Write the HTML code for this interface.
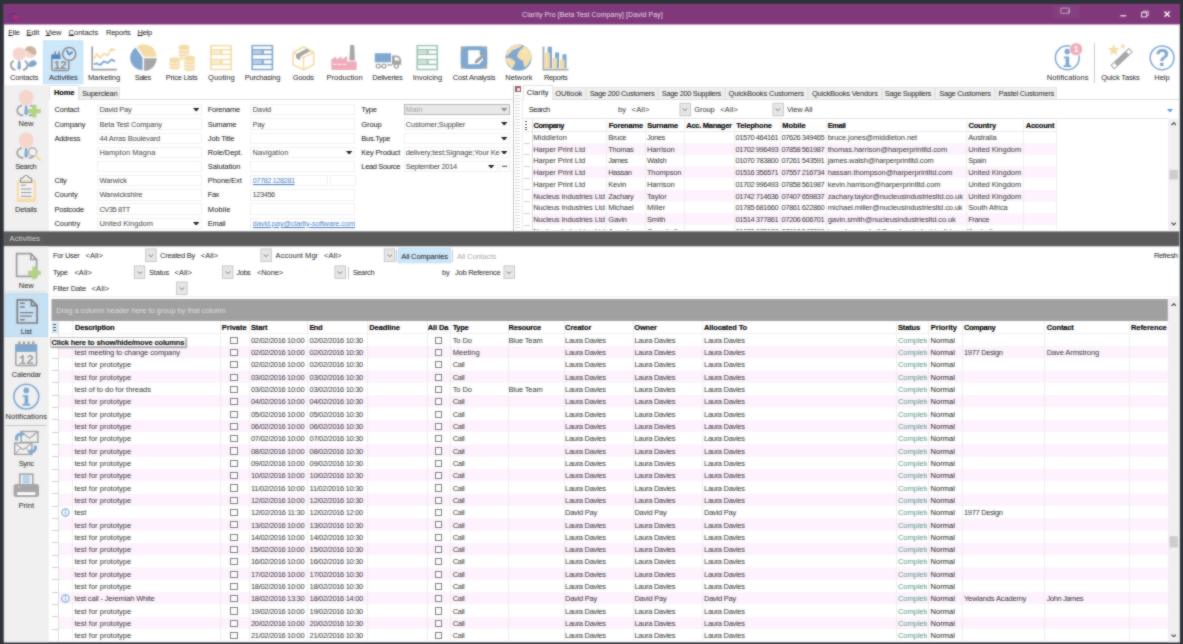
<!DOCTYPE html>
<html lang="en"><head><meta charset="utf-8"><title>Clarity Pro [Beta Test Company] [David Pay]</title>
<style>
html,body{margin:0;padding:0;background:#2f3239;overflow:hidden}
body{width:1183px;height:644px;position:relative;font-family:"Liberation Sans",sans-serif;font-size:7.5px;color:#2a2a2a}
#app{position:absolute;left:0;top:0;width:1183px;height:644px;overflow:hidden}
#app div,#app span.t,#app svg{position:absolute}
.t{white-space:pre;line-height:10px;height:10px;display:block}
u{text-decoration:underline;text-underline-offset:0.4px;text-decoration-thickness:0.7px}
#soft{position:absolute;left:0;top:0;width:1183px;height:644px;-webkit-backdrop-filter:blur(1px);backdrop-filter:blur(1px);opacity:.55;pointer-events:none}
.t[style*=bold]{-webkit-text-stroke:0.15px currentColor}

</style></head>
<body>
<div id="app">
<svg style="left:0;top:0" width="1183" height="644" viewBox="0 0 1183 644"><rect x="3.6" y="4.05" width="1176.5" height="638.55" fill="#fff"/><rect x="3.6" y="4.05" width="1176.5" height="20.4" fill="#80397b"/><rect x="43.3" y="40.8" width="39.6" height="42.9" fill="#cde6fb" stroke="#bcdcf4" stroke-width="0.8"/><rect x="3.6" y="84.9" width="45.1" height="146.6" fill="#f0f0f0"/><rect x="680" y="103.3" width="10.5" height="12.5" fill="#e6e6e6" stroke="#c2c2c2" stroke-width="0.9"/><rect x="772.95" y="103.3" width="10.5" height="12.5" fill="#e6e6e6" stroke="#c2c2c2" stroke-width="0.9"/><rect x="531.6" y="142.91" width="524.4" height="11.71" fill="#fcf2fc"/><rect x="531.6" y="166.32" width="524.4" height="11.71" fill="#fcf2fc"/><rect x="531.6" y="189.73" width="524.4" height="11.71" fill="#fcf2fc"/><rect x="531.6" y="213.15" width="524.4" height="11.71" fill="#fcf2fc"/><rect x="1168" y="118.8" width="10.8" height="111.6" fill="#f0f0f0"/><rect x="1169.4" y="169.9" width="8.5" height="9.6" fill="#cdcdcd"/><rect x="3.6" y="231.4" width="1176.5" height="14.9" fill="#5b5b5b"/><rect x="3.6" y="246.3" width="45.1" height="396.3" fill="#f0f0f0"/><rect x="5.1" y="293.7" width="42.6" height="42.7" fill="#c6dff4" stroke="#b4d4ee" stroke-width="0.8"/><rect x="145.65" y="249" width="10.5" height="12.5" fill="#e6e6e6" stroke="#c2c2c2" stroke-width="0.9"/><rect x="260.85" y="249" width="10.5" height="12.5" fill="#e6e6e6" stroke="#c2c2c2" stroke-width="0.9"/><rect x="384.25" y="249" width="10.5" height="12.5" fill="#e6e6e6" stroke="#c2c2c2" stroke-width="0.9"/><rect x="398.4" y="248.1" width="52.3" height="14.8" fill="#cde6fb" stroke="#bcdcf4" stroke-width="0.8"/><rect x="134.3" y="265.9" width="10.5" height="12.5" fill="#e6e6e6" stroke="#c2c2c2" stroke-width="0.9"/><rect x="222.45" y="265.9" width="10.5" height="12.5" fill="#e6e6e6" stroke="#c2c2c2" stroke-width="0.9"/><rect x="334.95" y="265.9" width="10.5" height="12.5" fill="#e6e6e6" stroke="#c2c2c2" stroke-width="0.9"/><rect x="503.95" y="265.9" width="10.5" height="12.5" fill="#e6e6e6" stroke="#c2c2c2" stroke-width="0.9"/><rect x="176.6" y="281.95" width="10.5" height="12.5" fill="#e6e6e6" stroke="#c2c2c2" stroke-width="0.9"/><rect x="51.5" y="299" width="1116.7" height="22" fill="#a0a0a0"/><rect x="51.6" y="322.2" width="6.3" height="11.9" fill="#d3e8fa"/><rect x="58" y="345.91" width="1109.6" height="12.31" fill="#fcf2fc"/><rect x="58" y="370.53" width="1109.6" height="12.31" fill="#fcf2fc"/><rect x="58" y="395.15" width="1109.6" height="12.31" fill="#fcf2fc"/><rect x="58" y="419.77" width="1109.6" height="12.31" fill="#fcf2fc"/><rect x="58" y="444.39" width="1109.6" height="12.31" fill="#fcf2fc"/><rect x="58" y="469.01" width="1109.6" height="12.31" fill="#fcf2fc"/><rect x="58" y="493.63" width="1109.6" height="12.31" fill="#fcf2fc"/><rect x="58" y="518.25" width="1109.6" height="12.31" fill="#fcf2fc"/><rect x="58" y="542.87" width="1109.6" height="12.31" fill="#fcf2fc"/><rect x="58" y="567.49" width="1109.6" height="12.31" fill="#fcf2fc"/><rect x="58" y="592.11" width="1109.6" height="12.31" fill="#fcf2fc"/><rect x="58" y="616.73" width="1109.6" height="12.31" fill="#fcf2fc"/><rect x="1167.8" y="297.6" width="11" height="345" fill="#f0f0f0"/><rect x="1169.5" y="536.2" width="8.4" height="11.3" fill="#cdcdcd"/><rect x="1179.2" y="24.4" width="1" height="618.2" fill="#d0d0d0"/></svg>
<span class="t" style="left:522.07px;top:10.1px;font-size:6.9px;letter-spacing:0.13px;color:#eadbe9;">Clarity Pro [Beta Test Company] [David Pay]</span>
<span class="t mn" style="left:8.3px;top:28.4px;letter-spacing:-0.12px;color:#1a1a1a;"><u>F</u>ile</span>
<span class="t mn" style="left:26.6px;top:28.4px;letter-spacing:-0.08px;color:#1a1a1a;"><u>E</u>dit</span>
<span class="t mn" style="left:45.6px;top:28.4px;letter-spacing:-0.13px;color:#1a1a1a;"><u>V</u>iew</span>
<span class="t mn" style="left:68.6px;top:28.4px;letter-spacing:-0.01px;color:#1a1a1a;"><u>C</u>ontacts</span>
<span class="t mn" style="left:106px;top:28.4px;letter-spacing:-0.25px;color:#1a1a1a;">Reports</span>
<span class="t mn" style="left:137.5px;top:28.4px;letter-spacing:-0.26px;color:#1a1a1a;"><u>H</u>elp</span>
<span class="t" style="left:9.88px;top:73px;letter-spacing:-0.14px;color:#1f1f1f;">Contacts</span>
<span class="t" style="left:49.01px;top:73px;letter-spacing:-0.09px;color:#1f1f1f;">Activities</span>
<span class="t" style="left:87.95px;top:73px;letter-spacing:-0.1px;color:#1f1f1f;">Marketing</span>
<span class="t" style="left:134.8px;top:73px;letter-spacing:-0.59px;color:#1f1f1f;">Sales</span>
<span class="t" style="left:165.86px;top:73px;letter-spacing:-0.27px;color:#1f1f1f;">Price Lists</span>
<span class="t" style="left:208.08px;top:73px;letter-spacing:0.06px;color:#1f1f1f;">Quoting</span>
<span class="t" style="left:244.7px;top:73px;letter-spacing:-0.19px;color:#1f1f1f;">Purchasing</span>
<span class="t" style="left:292.87px;top:73px;letter-spacing:-0.26px;color:#1f1f1f;">Goods</span>
<span class="t" style="left:326.52px;top:73px;letter-spacing:0.03px;color:#1f1f1f;">Production</span>
<span class="t" style="left:372.26px;top:73px;letter-spacing:-0.27px;color:#1f1f1f;">Deliveries</span>
<span class="t" style="left:412.73px;top:73px;letter-spacing:-0.03px;color:#1f1f1f;">Invoicing</span>
<span class="t" style="left:452.8px;top:73px;letter-spacing:-0.2px;color:#1f1f1f;">Cost Analysis</span>
<span class="t" style="left:505.36px;top:73px;letter-spacing:-0.07px;color:#1f1f1f;">Network</span>
<span class="t" style="left:543.94px;top:73px;letter-spacing:-0.42px;color:#1f1f1f;">Reports</span>
<span class="t" style="left:1046.79px;top:73px;letter-spacing:0.08px;color:#1f1f1f;">Notifications</span>
<span class="t" style="left:1101.21px;top:73px;letter-spacing:-0.17px;color:#1f1f1f;">Quick Tasks</span>
<span class="t" style="left:1154.33px;top:73px;letter-spacing:-0.03px;color:#1f1f1f;">Help</span>
<div style="left:1094.3px;top:42.6px;width:1px;height:40px;background:#c9c9c9;"></div>
<span class="t" style="left:18.57px;top:119px;letter-spacing:-0.07px;color:#1f1f1f;">New</span>
<span class="t" style="left:15.29px;top:161.8px;letter-spacing:-0.47px;color:#1f1f1f;">Search</span>
<span class="t" style="left:15.12px;top:205px;letter-spacing:-0.19px;color:#1f1f1f;">Details</span>
<div style="left:49px;top:99px;width:464px;height:1px;background:#dcdcdc;"></div>
<div style="left:49.4px;top:85px;width:29.6px;height:14.6px;background:#fff;border:1px solid #e3e3e3;border-bottom:none;box-sizing:border-box;"></div>
<div style="left:79.3px;top:87.2px;width:40.4px;height:12px;background:#f0f0f0;border:1px solid #e3e3e3;border-bottom:none;box-sizing:border-box;"></div>
<span class="t" style="left:53.9px;top:87.5px;letter-spacing:-0.13px;color:#000;font-weight:bold;">Home</span>
<span class="t" style="left:82px;top:88.5px;letter-spacing:-0.26px;color:#222;">Superclean</span>
<span class="t" style="left:54.4px;top:105.4px;letter-spacing:-0.17px;color:#151515;">Contact</span>
<div style="left:97.1px;top:104.3px;width:105px;height:11.2px;background:#fff;border:1px solid #efefef;box-sizing:border-box;"></div>
<span class="t" style="left:99.4px;top:105.4px;letter-spacing:-0.24px;color:#444;width:93px;overflow:hidden;">David Pay</span>
<svg style="left:193px;top:108.2px" width="6.4" height="3.6" viewBox="0 0 64 36"><path d="M0 0H64L32 36z" fill="#1a1a1a"/></svg>
<span class="t" style="left:54.4px;top:119.57px;letter-spacing:-0.18px;color:#151515;">Company</span>
<div style="left:97.1px;top:118.47px;width:105px;height:11.2px;background:#fff;border:1px solid #efefef;box-sizing:border-box;"></div>
<span class="t" style="left:99.4px;top:119.57px;letter-spacing:-0.17px;color:#444;width:102px;overflow:hidden;">Beta Test Company</span>
<span class="t" style="left:54.4px;top:133.74px;letter-spacing:-0.23px;color:#151515;">Address</span>
<div style="left:97.1px;top:132.64px;width:105px;height:11.2px;background:#fff;border:1px solid #efefef;box-sizing:border-box;"></div>
<span class="t" style="left:99.4px;top:133.74px;letter-spacing:-0.18px;color:#444;width:102px;overflow:hidden;">44 Arras Boulevard</span>
<div style="left:97.1px;top:146.81px;width:105px;height:11.2px;background:#fff;border:1px solid #efefef;box-sizing:border-box;"></div>
<span class="t" style="left:99.4px;top:147.91px;letter-spacing:0.04px;color:#444;width:102px;overflow:hidden;">Hampton Magna</span>
<div style="left:97.1px;top:160.98px;width:105px;height:11.2px;background:#fff;border:1px solid #efefef;box-sizing:border-box;"></div>
<span class="t" style="left:54.4px;top:176.25px;letter-spacing:-0.15px;color:#151515;">City</span>
<div style="left:97.1px;top:175.15px;width:105px;height:11.2px;background:#fff;border:1px solid #efefef;box-sizing:border-box;"></div>
<span class="t" style="left:99.4px;top:176.25px;letter-spacing:-0.06px;color:#444;width:102px;overflow:hidden;">Warwick</span>
<span class="t" style="left:54.4px;top:190.42px;letter-spacing:-0.06px;color:#151515;">County</span>
<div style="left:97.1px;top:189.32px;width:105px;height:11.2px;background:#fff;border:1px solid #efefef;box-sizing:border-box;"></div>
<span class="t" style="left:99.4px;top:190.42px;letter-spacing:-0.11px;color:#444;width:102px;overflow:hidden;">Warwickshire</span>
<span class="t" style="left:54.4px;top:204.59px;letter-spacing:-0.21px;color:#151515;">Postcode</span>
<div style="left:97.1px;top:203.49px;width:105px;height:11.2px;background:#fff;border:1px solid #efefef;box-sizing:border-box;"></div>
<span class="t" style="left:99.4px;top:204.59px;letter-spacing:-0.46px;color:#444;width:102px;overflow:hidden;">CV35 8TT</span>
<span class="t" style="left:54.4px;top:218.76px;letter-spacing:-0.05px;color:#151515;">Country</span>
<div style="left:97.1px;top:217.66px;width:105px;height:11.2px;background:#fff;border:1px solid #efefef;box-sizing:border-box;"></div>
<span class="t" style="left:99.4px;top:218.76px;letter-spacing:0.02px;color:#444;width:93px;overflow:hidden;">United Kingdom</span>
<svg style="left:193px;top:221.56px" width="6.4" height="3.6" viewBox="0 0 64 36"><path d="M0 0H64L32 36z" fill="#1a1a1a"/></svg>
<span class="t" style="left:207.8px;top:105.4px;letter-spacing:-0.27px;color:#151515;">Forename</span>
<div style="left:250.3px;top:104.3px;width:105.2px;height:11.2px;background:#fff;border:1px solid #efefef;box-sizing:border-box;"></div>
<span class="t" style="left:252.6px;top:105.4px;letter-spacing:-0.14px;color:#444;width:102.2px;overflow:hidden;">David</span>
<span class="t" style="left:207.8px;top:119.57px;letter-spacing:-0.3px;color:#151515;">Surname</span>
<div style="left:250.3px;top:118.47px;width:105.2px;height:11.2px;background:#fff;border:1px solid #efefef;box-sizing:border-box;"></div>
<span class="t" style="left:252.6px;top:119.57px;letter-spacing:-0.41px;color:#444;width:102.2px;overflow:hidden;">Pay</span>
<span class="t" style="left:207.8px;top:133.74px;letter-spacing:-0.16px;color:#151515;">Job Title</span>
<div style="left:250.3px;top:132.64px;width:105.2px;height:11.2px;background:#fff;border:1px solid #efefef;box-sizing:border-box;"></div>
<span class="t" style="left:207.8px;top:147.91px;letter-spacing:-0.09px;color:#151515;">Role/Dept.</span>
<div style="left:250.3px;top:146.81px;width:105.2px;height:11.2px;background:#fff;border:1px solid #efefef;box-sizing:border-box;"></div>
<span class="t" style="left:252.6px;top:147.91px;letter-spacing:0.03px;color:#444;width:93.2px;overflow:hidden;">Navigation</span>
<svg style="left:346.4px;top:150.71px" width="6.4" height="3.6" viewBox="0 0 64 36"><path d="M0 0H64L32 36z" fill="#1a1a1a"/></svg>
<span class="t" style="left:207.8px;top:162.08px;letter-spacing:-0.07px;color:#151515;">Salutation</span>
<div style="left:250.3px;top:160.98px;width:105.2px;height:11.2px;background:#fff;border:1px solid #efefef;box-sizing:border-box;"></div>
<span class="t" style="left:207.8px;top:176.25px;letter-spacing:-0.08px;color:#151515;">Phone/Ext</span>
<div style="left:250.3px;top:175.15px;width:77.9px;height:11.2px;background:#fff;border:1px solid #efefef;box-sizing:border-box;"></div>
<span class="t" style="left:252.6px;top:176.25px;letter-spacing:-0.5px;color:#4f86c6;width:74.9px;overflow:hidden;text-decoration:underline;">07782 128281</span>
<div style="left:330px;top:175.15px;width:25.5px;height:11.2px;background:#fff;border:1px solid #efefef;box-sizing:border-box;"></div>
<span class="t" style="left:207.8px;top:190.42px;letter-spacing:-0.47px;color:#151515;">Fax</span>
<div style="left:250.3px;top:189.32px;width:105.2px;height:11.2px;background:#fff;border:1px solid #efefef;box-sizing:border-box;"></div>
<span class="t" style="left:252.6px;top:190.42px;letter-spacing:-0.47px;color:#444;width:102.2px;overflow:hidden;">123456</span>
<span class="t" style="left:207.8px;top:204.59px;letter-spacing:0.12px;color:#151515;">Mobile</span>
<div style="left:250.3px;top:203.49px;width:105.2px;height:11.2px;background:#fff;border:1px solid #efefef;box-sizing:border-box;"></div>
<span class="t" style="left:207.8px;top:218.76px;letter-spacing:-0.3px;color:#151515;">Email</span>
<div style="left:250.3px;top:217.66px;width:105.2px;height:11.2px;background:#fff;border:1px solid #efefef;box-sizing:border-box;"></div>
<span class="t" style="left:252.6px;top:218.76px;letter-spacing:-0.13px;color:#4f86c6;width:102.2px;overflow:hidden;text-decoration:underline;">david.pay@clarity-software.com</span>
<span class="t" style="left:361.3px;top:105.4px;letter-spacing:-0.21px;color:#151515;">Type</span>
<div style="left:403.5px;top:104.3px;width:106.1px;height:11.2px;background:#e9e9e9;border:1px solid #b4b4b4;box-sizing:border-box;"></div>
<span class="t" style="left:405.8px;top:105.4px;letter-spacing:0.09px;color:#a0a0a0;width:94.1px;overflow:hidden;">Main</span>
<svg style="left:500.5px;top:108.2px" width="6.4" height="3.6" viewBox="0 0 64 36"><path d="M0 0H64L32 36z" fill="#8c8c8c"/></svg>
<span class="t" style="left:361.3px;top:119.57px;letter-spacing:-0.1px;color:#151515;">Group</span>
<div style="left:403.5px;top:118.47px;width:106.1px;height:11.2px;background:#fff;border:1px solid #efefef;box-sizing:border-box;"></div>
<span class="t" style="left:405.8px;top:119.57px;letter-spacing:-0.17px;color:#444;width:94.1px;overflow:hidden;">Customer;Supplier</span>
<svg style="left:500.5px;top:122.37px" width="6.4" height="3.6" viewBox="0 0 64 36"><path d="M0 0H64L32 36z" fill="#1a1a1a"/></svg>
<span class="t" style="left:361.3px;top:133.74px;letter-spacing:-0.29px;color:#151515;">Bus.Type</span>
<div style="left:403.5px;top:132.64px;width:106.1px;height:11.2px;background:#fff;border:1px solid #efefef;box-sizing:border-box;"></div>
<svg style="left:500.5px;top:136.54px" width="6.4" height="3.6" viewBox="0 0 64 36"><path d="M0 0H64L32 36z" fill="#1a1a1a"/></svg>
<span class="t" style="left:361.3px;top:147.91px;letter-spacing:-0.19px;color:#151515;">Key Product</span>
<div style="left:403.5px;top:146.81px;width:106.1px;height:11.2px;background:#fff;border:1px solid #efefef;box-sizing:border-box;"></div>
<span class="t" style="left:405.8px;top:147.91px;letter-spacing:-0.15px;color:#444;width:94.1px;overflow:hidden;">delivery;test;Signage;Your Ke</span>
<svg style="left:500.5px;top:150.71px" width="6.4" height="3.6" viewBox="0 0 64 36"><path d="M0 0H64L32 36z" fill="#1a1a1a"/></svg>
<span class="t" style="left:361.3px;top:162.08px;letter-spacing:-0.34px;color:#151515;">Lead Source</span>
<div style="left:403.5px;top:160.98px;width:94px;height:11.2px;background:#fff;border:1px solid #efefef;box-sizing:border-box;"></div>
<span class="t" style="left:405.8px;top:162.08px;letter-spacing:-0.31px;color:#444;width:82px;overflow:hidden;">September 2014</span>
<svg style="left:488.4px;top:164.88px" width="6.4" height="3.6" viewBox="0 0 64 36"><path d="M0 0H64L32 36z" fill="#1a1a1a"/></svg>
<div style="left:499px;top:160.98px;width:10.6px;height:11.2px;background:#fff;border:1px solid #efefef;box-sizing:border-box;"></div>
<span class="t" style="left:501.72px;top:159.88px;letter-spacing:-0.35px;color:#111;font-weight:bold;">...</span>
<div style="left:513.2px;top:85px;width:1px;height:146px;background:#c4c4c4;"></div>
<div style="left:515px;top:86.2px;width:6px;height:5.8px;background:#9a5a62;"></div>
<div style="left:516.6px;top:88px;width:3.2px;height:2.8px;background:#f1e9ea;"></div>
<div style="left:515.4px;top:95px;width:4.6px;height:135px;background-image:repeating-linear-gradient(to bottom,#dcdcdc 0,#dcdcdc 1px,transparent 1px,transparent 3px);"></div>
<div style="left:522.2px;top:99px;width:1px;height:131px;background:#ececec;"></div>
<div style="left:520.5px;top:99.2px;width:660px;height:1px;background:#dcdcdc;"></div>
<div style="left:522.8px;top:85px;width:29.8px;height:14.6px;background:#fff;border:1px solid #e3e3e3;border-bottom:none;box-sizing:border-box;"></div>
<span class="t" style="left:526.7px;top:88.1px;letter-spacing:0.11px;color:#111;">Clarity</span>
<div style="left:552.4px;top:87.2px;width:33.4px;height:12px;background:#f0f0f0;border:1px solid #e3e3e3;border-bottom:none;box-sizing:border-box;"></div>
<span class="t" style="left:555.3px;top:88.7px;letter-spacing:-0.01px;color:#222;">OUtlook</span>
<div style="left:585.8px;top:87.2px;width:72.6px;height:12px;background:#f0f0f0;border:1px solid #e3e3e3;border-bottom:none;box-sizing:border-box;"></div>
<span class="t" style="left:589.7px;top:88.7px;letter-spacing:-0.32px;color:#222;">Sage 200 Customers</span>
<div style="left:658.4px;top:87.2px;width:66.7px;height:12px;background:#f0f0f0;border:1px solid #e3e3e3;border-bottom:none;box-sizing:border-box;"></div>
<span class="t" style="left:661.8px;top:88.7px;letter-spacing:-0.35px;color:#222;">Sage 200 Suppliers</span>
<div style="left:725.1px;top:87.2px;width:83px;height:12px;background:#f0f0f0;border:1px solid #e3e3e3;border-bottom:none;box-sizing:border-box;"></div>
<span class="t" style="left:728.5px;top:88.7px;letter-spacing:-0.15px;color:#222;">QuickBooks Customers</span>
<div style="left:808.1px;top:87.2px;width:73.9px;height:12px;background:#f0f0f0;border:1px solid #e3e3e3;border-bottom:none;box-sizing:border-box;"></div>
<span class="t" style="left:812px;top:88.7px;letter-spacing:-0.22px;color:#222;">QuickBooks Vendors</span>
<div style="left:882px;top:87.2px;width:53.4px;height:12px;background:#f0f0f0;border:1px solid #e3e3e3;border-bottom:none;box-sizing:border-box;"></div>
<span class="t" style="left:884.8px;top:88.7px;letter-spacing:-0.33px;color:#222;">Sage Suppliers</span>
<div style="left:935.4px;top:87.2px;width:59.2px;height:12px;background:#f0f0f0;border:1px solid #e3e3e3;border-bottom:none;box-sizing:border-box;"></div>
<span class="t" style="left:939.2px;top:88.7px;letter-spacing:-0.31px;color:#222;">Sage Customers</span>
<div style="left:994.6px;top:87.2px;width:62.8px;height:12px;background:#f0f0f0;border:1px solid #e3e3e3;border-bottom:none;box-sizing:border-box;"></div>
<span class="t" style="left:998.5px;top:88.7px;letter-spacing:-0.23px;color:#222;">Pastel Customers</span>
<span class="t" style="left:528.7px;top:104.9px;letter-spacing:-0.47px;color:#151515;">Search</span>
<span class="t" style="left:618.1px;top:104.9px;letter-spacing:0.04px;color:#333;">by</span>
<span class="t" style="left:631.6px;top:104.9px;letter-spacing:0.18px;color:#333;">&lt;All&gt;</span>
<svg style="left:682.35px;top:108.05px" width="5.8" height="3.4" viewBox="0 0 58 34"><path d="M5 5L29 27L53 5" fill="none" stroke="#6a6a6a" stroke-width="9"/></svg>
<span class="t" style="left:694.3px;top:104.9px;letter-spacing:-0.1px;color:#333;">Group</span>
<span class="t" style="left:720.2px;top:104.9px;letter-spacing:0.18px;color:#333;">&lt;All&gt;</span>
<svg style="left:775.3px;top:108.05px" width="5.8" height="3.4" viewBox="0 0 58 34"><path d="M5 5L29 27L53 5" fill="none" stroke="#6a6a6a" stroke-width="9"/></svg>
<span class="t" style="left:786.9px;top:104.9px;letter-spacing:-0.08px;color:#333;">View All</span>
<svg style="left:1167.3px;top:108.6px" width="6" height="3.6" viewBox="0 0 60 36"><path d="M0 0H60L30 36z" fill="#5b9bd5"/></svg>
<div style="left:523.5px;top:118.4px;width:644px;height:1px;background:#e4e4e4;"></div>
<div style="left:523.5px;top:131.2px;width:532.5px;height:1px;background:#e8e8e8;"></div>
<span class="t" style="left:533.6px;top:120.8px;letter-spacing:-0.54px;color:#000;font-weight:bold;">Company</span>
<span class="t" style="left:608.7px;top:120.8px;letter-spacing:-0.21px;color:#000;font-weight:bold;">Forename</span>
<span class="t" style="left:647.2px;top:120.8px;letter-spacing:-0.2px;color:#000;font-weight:bold;">Surname</span>
<span class="t" style="left:686.3px;top:120.8px;letter-spacing:-0.28px;color:#000;font-weight:bold;">Acc. Manager</span>
<span class="t" style="left:736.3px;top:120.8px;letter-spacing:-0.15px;color:#000;font-weight:bold;">Telephone</span>
<span class="t" style="left:782.3px;top:120.8px;letter-spacing:-0.07px;color:#000;font-weight:bold;">Mobile</span>
<span class="t" style="left:827.7px;top:120.8px;letter-spacing:-0.44px;color:#000;font-weight:bold;">Email</span>
<span class="t" style="left:968.4px;top:120.8px;letter-spacing:-0.18px;color:#000;font-weight:bold;">Country</span>
<span class="t" style="left:1025.7px;top:120.8px;letter-spacing:-0.21px;color:#000;font-weight:bold;">Account</span>
<div style="left:524.6px;top:121.2px;width:2.6px;height:8.4px;background-image:repeating-linear-gradient(to bottom,#555 0,#555 1.1px,transparent 1.1px,transparent 2.8px);"></div>
<div style="left:524.2px;top:142.61px;width:6.2px;height:0.8px;background:#cfcfcf;"></div>
<span class="t" style="left:533.2px;top:133px;letter-spacing:0.15px;color:#343434;">Middleton</span>
<span class="t" style="left:608.3px;top:133px;letter-spacing:-0.34px;color:#343434;">Bruce</span>
<span class="t" style="left:646.9px;top:133px;letter-spacing:-0.43px;color:#343434;">Jones</span>
<span class="t" style="left:735.6px;top:133px;letter-spacing:-0.45px;color:#343434;">01570 464161</span>
<span class="t" style="left:781.6px;top:133px;letter-spacing:-0.45px;color:#343434;">07626 349465</span>
<span class="t" style="left:827.7px;top:133px;letter-spacing:-0.08px;color:#343434;">bruce.jones@middleton.net</span>
<span class="t" style="left:968.2px;top:133px;letter-spacing:-0.09px;color:#343434;">Australia</span>
<div style="left:524.2px;top:154.31px;width:6.2px;height:0.8px;background:#cfcfcf;"></div>
<span class="t" style="left:533.2px;top:144.71px;letter-spacing:-0.07px;color:#343434;">Harper Print Ltd</span>
<span class="t" style="left:608.3px;top:144.71px;letter-spacing:-0.31px;color:#343434;">Thomas</span>
<span class="t" style="left:646.9px;top:144.71px;letter-spacing:-0.08px;color:#343434;">Harrison</span>
<span class="t" style="left:735.6px;top:144.71px;letter-spacing:-0.45px;color:#343434;">01702 996493</span>
<span class="t" style="left:781.6px;top:144.71px;letter-spacing:-0.45px;color:#343434;">07858 561987</span>
<span class="t" style="left:827.7px;top:144.71px;letter-spacing:-0.07px;color:#343434;">thomas.harrison@harperprintltd.com</span>
<span class="t" style="left:968.2px;top:144.71px;letter-spacing:-0.03px;color:#343434;">United Kingdom</span>
<div style="left:524.2px;top:166.02px;width:6.2px;height:0.8px;background:#cfcfcf;"></div>
<span class="t" style="left:533.2px;top:156.42px;letter-spacing:-0.07px;color:#343434;">Harper Print Ltd</span>
<span class="t" style="left:608.3px;top:156.42px;letter-spacing:-0.6px;color:#343434;">James</span>
<span class="t" style="left:646.9px;top:156.42px;letter-spacing:-0.17px;color:#343434;">Walsh</span>
<span class="t" style="left:735.6px;top:156.42px;letter-spacing:-0.45px;color:#343434;">01070 783800</span>
<span class="t" style="left:781.6px;top:156.42px;letter-spacing:-0.45px;color:#343434;">07261 543591</span>
<span class="t" style="left:827.7px;top:156.42px;letter-spacing:-0.11px;color:#343434;">james.walsh@harperprintltd.com</span>
<span class="t" style="left:968.2px;top:156.42px;letter-spacing:-0.26px;color:#343434;">Spain</span>
<div style="left:524.2px;top:177.73px;width:6.2px;height:0.8px;background:#cfcfcf;"></div>
<span class="t" style="left:533.2px;top:168.12px;letter-spacing:-0.07px;color:#343434;">Harper Print Ltd</span>
<span class="t" style="left:608.3px;top:168.12px;letter-spacing:-0.34px;color:#343434;">Hassan</span>
<span class="t" style="left:646.9px;top:168.12px;letter-spacing:-0.12px;color:#343434;">Thompson</span>
<span class="t" style="left:735.6px;top:168.12px;letter-spacing:-0.45px;color:#343434;">01516 356571</span>
<span class="t" style="left:781.6px;top:168.12px;letter-spacing:-0.45px;color:#343434;">07557 216734</span>
<span class="t" style="left:827.7px;top:168.12px;letter-spacing:-0.08px;color:#343434;">hassan.thompson@harperprintltd.com</span>
<span class="t" style="left:968.2px;top:168.12px;letter-spacing:-0.03px;color:#343434;">United Kingdom</span>
<div style="left:524.2px;top:189.43px;width:6.2px;height:0.8px;background:#cfcfcf;"></div>
<span class="t" style="left:533.2px;top:179.83px;letter-spacing:-0.07px;color:#343434;">Harper Print Ltd</span>
<span class="t" style="left:608.3px;top:179.83px;letter-spacing:-0.18px;color:#343434;">Kevin</span>
<span class="t" style="left:646.9px;top:179.83px;letter-spacing:-0.08px;color:#343434;">Harrison</span>
<span class="t" style="left:735.6px;top:179.83px;letter-spacing:-0.45px;color:#343434;">01702 996493</span>
<span class="t" style="left:781.6px;top:179.83px;letter-spacing:-0.45px;color:#343434;">07858 561987</span>
<span class="t" style="left:827.7px;top:179.83px;letter-spacing:-0.06px;color:#343434;">kevin.harrison@harperprintltd.com</span>
<span class="t" style="left:968.2px;top:179.83px;letter-spacing:-0.03px;color:#343434;">United Kingdom</span>
<div style="left:524.2px;top:201.14px;width:6.2px;height:0.8px;background:#cfcfcf;"></div>
<span class="t" style="left:533.2px;top:191.54px;letter-spacing:-0.12px;color:#343434;">Nucleus Industries Ltd</span>
<span class="t" style="left:608.3px;top:191.54px;letter-spacing:-0.26px;color:#343434;">Zachary</span>
<span class="t" style="left:646.9px;top:191.54px;letter-spacing:-0.05px;color:#343434;">Taylor</span>
<span class="t" style="left:735.6px;top:191.54px;letter-spacing:-0.45px;color:#343434;">01742 714636</span>
<span class="t" style="left:781.6px;top:191.54px;letter-spacing:-0.45px;color:#343434;">07407 659837</span>
<span class="t" style="left:827.7px;top:191.54px;letter-spacing:-0.11px;color:#343434;">zachary.taylor@nucleusindustriesltd.co.uk</span>
<span class="t" style="left:968.2px;top:191.54px;letter-spacing:-0.03px;color:#343434;">United Kingdom</span>
<div style="left:524.2px;top:212.85px;width:6.2px;height:0.8px;background:#cfcfcf;"></div>
<span class="t" style="left:533.2px;top:203.25px;letter-spacing:-0.12px;color:#343434;">Nucleus Industries Ltd</span>
<span class="t" style="left:608.3px;top:203.25px;letter-spacing:-0.08px;color:#343434;">Michael</span>
<span class="t" style="left:646.9px;top:203.25px;letter-spacing:0.09px;color:#343434;">Miller</span>
<span class="t" style="left:735.6px;top:203.25px;letter-spacing:-0.45px;color:#343434;">01785 681660</span>
<span class="t" style="left:781.6px;top:203.25px;letter-spacing:-0.45px;color:#343434;">07861 622860</span>
<span class="t" style="left:827.7px;top:203.25px;letter-spacing:-0.11px;color:#343434;">michael.miller@nucleusindustriesltd.co.uk</span>
<span class="t" style="left:968.2px;top:203.25px;letter-spacing:-0.08px;color:#343434;">South Africa</span>
<div style="left:524.2px;top:224.56px;width:6.2px;height:0.8px;background:#cfcfcf;"></div>
<span class="t" style="left:533.2px;top:214.95px;letter-spacing:-0.12px;color:#343434;">Nucleus Industries Ltd</span>
<span class="t" style="left:608.3px;top:214.95px;letter-spacing:-0.22px;color:#343434;">Gavin</span>
<span class="t" style="left:646.9px;top:214.95px;letter-spacing:-0.14px;color:#343434;">Smith</span>
<span class="t" style="left:735.6px;top:214.95px;letter-spacing:-0.45px;color:#343434;">01514 377861</span>
<span class="t" style="left:781.6px;top:214.95px;letter-spacing:-0.45px;color:#343434;">07206 606701</span>
<span class="t" style="left:827.7px;top:214.95px;letter-spacing:-0.09px;color:#343434;">gavin.smith@nucleusindustriesltd.co.uk</span>
<span class="t" style="left:968.2px;top:214.95px;letter-spacing:-0.4px;color:#343434;">France</span>
<div style="left:531px;top:225.31px;width:530px;height:4.89px;overflow:hidden">
<span class="t" style="left:2.2px;top:1.35px;letter-spacing:-0.12px;color:#343434;">Nucleus Industries Ltd</span>
<span class="t" style="left:77.3px;top:1.35px;letter-spacing:-0.33px;color:#343434;">Joseph</span>
<span class="t" style="left:115.9px;top:1.35px;letter-spacing:-0.19px;color:#343434;">Campbell</span>
<span class="t" style="left:204.6px;top:1.35px;letter-spacing:-0.45px;color:#343434;">01670 985138</span>
<span class="t" style="left:250.6px;top:1.35px;letter-spacing:-0.45px;color:#343434;">07618 543299</span>
<span class="t" style="left:296.7px;top:1.35px;letter-spacing:-0.11px;color:#343434;">joseph.campbell@nucleusindustriesltd.co.uk</span>
<span class="t" style="left:437.2px;top:1.35px;letter-spacing:-0.09px;color:#343434;">Australia</span>
</div>
<div style="left:531.6px;top:119px;width:1px;height:111.2px;background:#dedede;"></div>
<div style="left:606.4px;top:119px;width:1px;height:111.2px;background:#eeeeee;"></div>
<div style="left:645.2px;top:119px;width:1px;height:111.2px;background:#eeeeee;"></div>
<div style="left:684px;top:119px;width:1px;height:111.2px;background:#eeeeee;"></div>
<div style="left:734.3px;top:119px;width:1px;height:111.2px;background:#eeeeee;"></div>
<div style="left:780.3px;top:119px;width:1px;height:111.2px;background:#eeeeee;"></div>
<div style="left:825.7px;top:119px;width:1px;height:111.2px;background:#eeeeee;"></div>
<div style="left:966px;top:119px;width:1px;height:111.2px;background:#eeeeee;"></div>
<div style="left:1023.4px;top:119px;width:1px;height:111.2px;background:#eeeeee;"></div>
<div style="left:1055.8px;top:119px;width:1px;height:111.2px;background:#eeeeee;"></div>
<svg style="left:1170.5px;top:122.4px" width="5.6" height="3.6" viewBox="0 0 56 36"><path d="M5 30L28 8L51 30" fill="none" stroke="#4a4a4a" stroke-width="13"/></svg>
<svg style="left:1170.5px;top:222px" width="5.6" height="3.6" viewBox="0 0 56 36"><path d="M5 6L28 28L51 6" fill="none" stroke="#4a4a4a" stroke-width="13"/></svg>
<span class="t" style="left:9.6px;top:234.1px;font-size:7.6px;letter-spacing:0.05px;color:#d6d6d6;">Activities</span>
<span class="t" style="left:18.87px;top:280.9px;letter-spacing:-0.07px;color:#1f1f1f;">New</span>
<span class="t" style="left:20.68px;top:327.3px;letter-spacing:-0.15px;color:#1f1f1f;">List</span>
<span class="t" style="left:11.71px;top:369.8px;letter-spacing:-0.18px;color:#1f1f1f;">Calendar</span>
<span class="t" style="left:5.62px;top:412.3px;letter-spacing:0.04px;color:#1f1f1f;">Notifications</span>
<span class="t" style="left:18.67px;top:459px;letter-spacing:-0.47px;color:#1f1f1f;">Sync</span>
<span class="t" style="left:18.6px;top:501.3px;color:#1f1f1f;">Print</span>
<div style="left:6.4px;top:424.6px;width:39.6px;height:1px;background:#c4c4c4;"></div>
<div style="left:6.4px;top:291.2px;width:39.6px;height:1px;background:#dedede;"></div>
<span class="t" style="left:53px;top:250.9px;letter-spacing:-0.33px;color:#1f1f1f;">For User</span>
<span class="t" style="left:85.5px;top:250.9px;letter-spacing:0.08px;color:#1f1f1f;">&lt;All&gt;</span>
<svg style="left:148px;top:253.75px" width="5.8" height="3.4" viewBox="0 0 58 34"><path d="M5 5L29 27L53 5" fill="none" stroke="#6a6a6a" stroke-width="9"/></svg>
<span class="t" style="left:160px;top:250.9px;letter-spacing:-0.25px;color:#1f1f1f;">Created By</span>
<span class="t" style="left:200.8px;top:250.9px;letter-spacing:0.08px;color:#1f1f1f;">&lt;All&gt;</span>
<svg style="left:263.2px;top:253.75px" width="5.8" height="3.4" viewBox="0 0 58 34"><path d="M5 5L29 27L53 5" fill="none" stroke="#6a6a6a" stroke-width="9"/></svg>
<span class="t" style="left:275.6px;top:250.9px;letter-spacing:0.04px;color:#1f1f1f;">Account Mgr</span>
<span class="t" style="left:324px;top:250.9px;letter-spacing:0.08px;color:#1f1f1f;">&lt;All&gt;</span>
<svg style="left:386.6px;top:253.75px" width="5.8" height="3.4" viewBox="0 0 58 34"><path d="M5 5L29 27L53 5" fill="none" stroke="#6a6a6a" stroke-width="9"/></svg>
<div style="left:396.2px;top:249.5px;width:1px;height:12px;background:#c4c4c4;"></div>
<span class="t" style="left:401.28px;top:251.6px;letter-spacing:-0.14px;color:#111;">All Companies</span>
<div style="left:452.3px;top:249.5px;width:1px;height:12px;background:#c4c4c4;"></div>
<span class="t" style="left:457px;top:251.6px;letter-spacing:-0.08px;color:#a8a8a8;">All Contacts</span>
<span class="t" style="left:1154px;top:250.9px;letter-spacing:-0.39px;color:#1f1f1f;">Refresh</span>
<span class="t" style="left:53px;top:267.7px;letter-spacing:-0.44px;color:#1f1f1f;">Type</span>
<span class="t" style="left:74.4px;top:267.7px;letter-spacing:0.08px;color:#1f1f1f;">&lt;All&gt;</span>
<svg style="left:136.65px;top:270.65px" width="5.8" height="3.4" viewBox="0 0 58 34"><path d="M5 5L29 27L53 5" fill="none" stroke="#6a6a6a" stroke-width="9"/></svg>
<span class="t" style="left:149px;top:267.7px;letter-spacing:-0.21px;color:#1f1f1f;">Status</span>
<span class="t" style="left:174.5px;top:267.7px;letter-spacing:0.08px;color:#1f1f1f;">&lt;All&gt;</span>
<svg style="left:224.8px;top:270.65px" width="5.8" height="3.4" viewBox="0 0 58 34"><path d="M5 5L29 27L53 5" fill="none" stroke="#6a6a6a" stroke-width="9"/></svg>
<span class="t" style="left:236.4px;top:267.7px;letter-spacing:-0.46px;color:#1f1f1f;">Jobs</span>
<span class="t" style="left:257px;top:267.7px;letter-spacing:-0.11px;color:#1f1f1f;">&lt;None&gt;</span>
<svg style="left:337.3px;top:270.65px" width="5.8" height="3.4" viewBox="0 0 58 34"><path d="M5 5L29 27L53 5" fill="none" stroke="#6a6a6a" stroke-width="9"/></svg>
<div style="left:348px;top:266.5px;width:1px;height:12px;background:#c4c4c4;"></div>
<span class="t" style="left:352.7px;top:267.7px;letter-spacing:-0.38px;color:#1f1f1f;">Search</span>
<span class="t" style="left:441.9px;top:267.7px;letter-spacing:0.04px;color:#1f1f1f;">by</span>
<span class="t" style="left:455px;top:267.7px;letter-spacing:-0.25px;color:#1f1f1f;">Job Reference</span>
<svg style="left:506.3px;top:270.65px" width="5.8" height="3.4" viewBox="0 0 58 34"><path d="M5 5L29 27L53 5" fill="none" stroke="#6a6a6a" stroke-width="9"/></svg>
<span class="t" style="left:53px;top:283.8px;letter-spacing:-0.14px;color:#1f1f1f;">Filter Date</span>
<span class="t" style="left:91.6px;top:283.8px;letter-spacing:0.08px;color:#1f1f1f;">&lt;All&gt;</span>
<svg style="left:178.95px;top:286.7px" width="5.8" height="3.4" viewBox="0 0 58 34"><path d="M5 5L29 27L53 5" fill="none" stroke="#6a6a6a" stroke-width="9"/></svg>
<div style="left:50px;top:296.4px;width:1130px;height:1px;background:#f0f0f0;"></div>
<span class="t" style="left:56.3px;top:305.8px;letter-spacing:-0.05px;color:#dedede;">Drag a column header here to group by that column</span>
<span class="t" style="left:75px;top:323.1px;letter-spacing:-0.16px;color:#000;font-weight:bold;">Description</span>
<span class="t" style="left:221.8px;top:323.1px;letter-spacing:-0.03px;color:#000;font-weight:bold;">Private</span>
<span class="t" style="left:250.9px;top:323.1px;letter-spacing:-0.1px;color:#000;font-weight:bold;">Start</span>
<span class="t" style="left:309.4px;top:323.1px;letter-spacing:-0.52px;color:#000;font-weight:bold;">End</span>
<span class="t" style="left:369.2px;top:323.1px;letter-spacing:-0.07px;color:#000;font-weight:bold;">Deadline</span>
<span class="t" style="left:427.8px;top:323.1px;letter-spacing:-0.13px;color:#000;font-weight:bold;">All Da</span>
<span class="t" style="left:452.7px;top:323.1px;letter-spacing:-0.36px;color:#000;font-weight:bold;">Type</span>
<span class="t" style="left:508.5px;top:323.1px;letter-spacing:-0.21px;color:#000;font-weight:bold;">Resource</span>
<span class="t" style="left:565px;top:323.1px;letter-spacing:-0.03px;color:#000;font-weight:bold;">Creator</span>
<span class="t" style="left:634.3px;top:323.1px;letter-spacing:-0.21px;color:#000;font-weight:bold;">Owner</span>
<span class="t" style="left:704px;top:323.1px;letter-spacing:-0.12px;color:#000;font-weight:bold;">Allocated To</span>
<span class="t" style="left:898px;top:323.1px;letter-spacing:-0.15px;color:#000;font-weight:bold;">Status</span>
<span class="t" style="left:930.8px;top:323.1px;letter-spacing:-0.03px;color:#000;font-weight:bold;">Priority</span>
<span class="t" style="left:963.9px;top:323.1px;letter-spacing:-0.4px;color:#000;font-weight:bold;">Company</span>
<span class="t" style="left:1046.7px;top:323.1px;letter-spacing:-0.13px;color:#000;font-weight:bold;">Contact</span>
<span class="t" style="left:1131px;top:323.1px;letter-spacing:-0.07px;color:#000;font-weight:bold;">Reference</span>
<div style="left:53.2px;top:324px;width:2.6px;height:8.4px;background-image:repeating-linear-gradient(to bottom,#555 0,#555 1.1px,transparent 1.1px,transparent 2.8px);"></div>
<div style="left:51.3px;top:333.2px;width:1116.3px;height:1px;background:#efefef;"></div>
<div style="left:52px;top:345.51px;width:5.8px;height:0.8px;background:#cfcfcf;"></div>
<span class="t" style="left:74.5px;top:335.86px;letter-spacing:0.02px;color:#343434;">test for prototype</span>
<div style="left:230.4px;top:336.66px;width:7.2px;height:7.2px;background:#fff;border:1px solid #7a7a7a;box-sizing:border-box;"></div>
<div style="left:434.6px;top:336.66px;width:7.2px;height:7.2px;background:#fff;border:1px solid #7a7a7a;box-sizing:border-box;"></div>
<span class="t" style="left:251px;top:335.86px;letter-spacing:-0.32px;color:#343434;">02/02/2016 10:00</span>
<span class="t" style="left:309.6px;top:335.86px;letter-spacing:-0.32px;color:#343434;">02/02/2016 10:30</span>
<span class="t" style="left:452.7px;top:335.86px;letter-spacing:-0.1px;color:#343434;">To Do</span>
<span class="t" style="left:508.5px;top:335.86px;letter-spacing:-0.14px;color:#343434;">Blue Team</span>
<span class="t" style="left:565px;top:335.86px;letter-spacing:-0.29px;color:#343434;">Laura Davies</span>
<span class="t" style="left:634.4px;top:335.86px;letter-spacing:-0.29px;color:#343434;">Laura Davies</span>
<span class="t" style="left:704px;top:335.86px;letter-spacing:-0.29px;color:#343434;">Laura Davies</span>
<span class="t" style="left:898px;top:335.86px;letter-spacing:-0.07px;color:#589988;width:29.4px;overflow:hidden;">Complete</span>
<span class="t" style="left:930.6px;top:335.86px;letter-spacing:0.02px;color:#161616;">Normal</span>
<div style="left:52px;top:357.82px;width:5.8px;height:0.8px;background:#cfcfcf;"></div>
<span class="t" style="left:74.5px;top:348.17px;letter-spacing:-0.1px;color:#343434;">test meeting to change company</span>
<div style="left:230.4px;top:348.97px;width:7.2px;height:7.2px;background:#fff;border:1px solid #7a7a7a;box-sizing:border-box;"></div>
<div style="left:434.6px;top:348.97px;width:7.2px;height:7.2px;background:#fff;border:1px solid #7a7a7a;box-sizing:border-box;"></div>
<span class="t" style="left:251px;top:348.17px;letter-spacing:-0.32px;color:#343434;">02/02/2016 10:00</span>
<span class="t" style="left:309.6px;top:348.17px;letter-spacing:-0.32px;color:#343434;">02/02/2016 10:30</span>
<span class="t" style="left:452.7px;top:348.17px;letter-spacing:0.06px;color:#343434;">Meeting</span>
<span class="t" style="left:565px;top:348.17px;letter-spacing:-0.29px;color:#343434;">Laura Davies</span>
<span class="t" style="left:634.4px;top:348.17px;letter-spacing:-0.29px;color:#343434;">Laura Davies</span>
<span class="t" style="left:704px;top:348.17px;letter-spacing:-0.29px;color:#343434;">Laura Davies</span>
<span class="t" style="left:898px;top:348.17px;letter-spacing:-0.07px;color:#589988;width:29.4px;overflow:hidden;">Complete</span>
<span class="t" style="left:930.6px;top:348.17px;letter-spacing:0.02px;color:#161616;">Normal</span>
<span class="t" style="left:963.9px;top:348.17px;letter-spacing:-0.3px;color:#343434;">1977 Design</span>
<span class="t" style="left:1046.7px;top:348.17px;letter-spacing:-0.1px;color:#343434;">Dave Armstrong</span>
<div style="left:52px;top:370.13px;width:5.8px;height:0.8px;background:#cfcfcf;"></div>
<span class="t" style="left:74.5px;top:360.48px;letter-spacing:0.02px;color:#343434;">test for prototype</span>
<div style="left:230.4px;top:361.28px;width:7.2px;height:7.2px;background:#fff;border:1px solid #7a7a7a;box-sizing:border-box;"></div>
<div style="left:434.6px;top:361.28px;width:7.2px;height:7.2px;background:#fff;border:1px solid #7a7a7a;box-sizing:border-box;"></div>
<span class="t" style="left:251px;top:360.48px;letter-spacing:-0.32px;color:#343434;">02/02/2016 10:00</span>
<span class="t" style="left:309.6px;top:360.48px;letter-spacing:-0.32px;color:#343434;">02/02/2016 10:30</span>
<span class="t" style="left:452.7px;top:360.48px;letter-spacing:-0.3px;color:#343434;">Call</span>
<span class="t" style="left:565px;top:360.48px;letter-spacing:-0.29px;color:#343434;">Laura Davies</span>
<span class="t" style="left:634.4px;top:360.48px;letter-spacing:-0.29px;color:#343434;">Laura Davies</span>
<span class="t" style="left:704px;top:360.48px;letter-spacing:-0.29px;color:#343434;">Laura Davies</span>
<span class="t" style="left:898px;top:360.48px;letter-spacing:-0.07px;color:#589988;width:29.4px;overflow:hidden;">Complete</span>
<span class="t" style="left:930.6px;top:360.48px;letter-spacing:0.02px;color:#161616;">Normal</span>
<div style="left:52px;top:382.44px;width:5.8px;height:0.8px;background:#cfcfcf;"></div>
<span class="t" style="left:74.5px;top:372.79px;letter-spacing:0.02px;color:#343434;">test for prototype</span>
<div style="left:230.4px;top:373.59px;width:7.2px;height:7.2px;background:#fff;border:1px solid #7a7a7a;box-sizing:border-box;"></div>
<div style="left:434.6px;top:373.59px;width:7.2px;height:7.2px;background:#fff;border:1px solid #7a7a7a;box-sizing:border-box;"></div>
<span class="t" style="left:251px;top:372.79px;letter-spacing:-0.32px;color:#343434;">03/02/2016 10:00</span>
<span class="t" style="left:309.6px;top:372.79px;letter-spacing:-0.32px;color:#343434;">03/02/2016 10:30</span>
<span class="t" style="left:452.7px;top:372.79px;letter-spacing:-0.3px;color:#343434;">Call</span>
<span class="t" style="left:565px;top:372.79px;letter-spacing:-0.29px;color:#343434;">Laura Davies</span>
<span class="t" style="left:634.4px;top:372.79px;letter-spacing:-0.29px;color:#343434;">Laura Davies</span>
<span class="t" style="left:704px;top:372.79px;letter-spacing:-0.29px;color:#343434;">Laura Davies</span>
<span class="t" style="left:898px;top:372.79px;letter-spacing:-0.07px;color:#589988;width:29.4px;overflow:hidden;">Complete</span>
<span class="t" style="left:930.6px;top:372.79px;letter-spacing:0.02px;color:#161616;">Normal</span>
<div style="left:52px;top:394.75px;width:5.8px;height:0.8px;background:#cfcfcf;"></div>
<span class="t" style="left:74.5px;top:385.1px;letter-spacing:-0.03px;color:#343434;">test of to do for threads</span>
<div style="left:230.4px;top:385.9px;width:7.2px;height:7.2px;background:#fff;border:1px solid #7a7a7a;box-sizing:border-box;"></div>
<div style="left:434.6px;top:385.9px;width:7.2px;height:7.2px;background:#fff;border:1px solid #7a7a7a;box-sizing:border-box;"></div>
<span class="t" style="left:251px;top:385.1px;letter-spacing:-0.32px;color:#343434;">03/02/2016 10:00</span>
<span class="t" style="left:309.6px;top:385.1px;letter-spacing:-0.32px;color:#343434;">03/02/2016 10:30</span>
<span class="t" style="left:452.7px;top:385.1px;letter-spacing:-0.1px;color:#343434;">To Do</span>
<span class="t" style="left:508.5px;top:385.1px;letter-spacing:-0.14px;color:#343434;">Blue Team</span>
<span class="t" style="left:565px;top:385.1px;letter-spacing:-0.29px;color:#343434;">Laura Davies</span>
<span class="t" style="left:634.4px;top:385.1px;letter-spacing:-0.29px;color:#343434;">Laura Davies</span>
<span class="t" style="left:704px;top:385.1px;letter-spacing:-0.29px;color:#343434;">Laura Davies</span>
<span class="t" style="left:898px;top:385.1px;letter-spacing:-0.07px;color:#589988;width:29.4px;overflow:hidden;">Complete</span>
<span class="t" style="left:930.6px;top:385.1px;letter-spacing:0.02px;color:#161616;">Normal</span>
<div style="left:52px;top:407.06px;width:5.8px;height:0.8px;background:#cfcfcf;"></div>
<span class="t" style="left:74.5px;top:397.41px;letter-spacing:0.02px;color:#343434;">test for prototype</span>
<div style="left:230.4px;top:398.21px;width:7.2px;height:7.2px;background:#fff;border:1px solid #7a7a7a;box-sizing:border-box;"></div>
<div style="left:434.6px;top:398.21px;width:7.2px;height:7.2px;background:#fff;border:1px solid #7a7a7a;box-sizing:border-box;"></div>
<span class="t" style="left:251px;top:397.41px;letter-spacing:-0.32px;color:#343434;">04/02/2016 10:00</span>
<span class="t" style="left:309.6px;top:397.41px;letter-spacing:-0.32px;color:#343434;">04/02/2016 10:30</span>
<span class="t" style="left:452.7px;top:397.41px;letter-spacing:-0.3px;color:#343434;">Call</span>
<span class="t" style="left:565px;top:397.41px;letter-spacing:-0.29px;color:#343434;">Laura Davies</span>
<span class="t" style="left:634.4px;top:397.41px;letter-spacing:-0.29px;color:#343434;">Laura Davies</span>
<span class="t" style="left:704px;top:397.41px;letter-spacing:-0.29px;color:#343434;">Laura Davies</span>
<span class="t" style="left:898px;top:397.41px;letter-spacing:-0.07px;color:#589988;width:29.4px;overflow:hidden;">Complete</span>
<span class="t" style="left:930.6px;top:397.41px;letter-spacing:0.02px;color:#161616;">Normal</span>
<div style="left:52px;top:419.37px;width:5.8px;height:0.8px;background:#cfcfcf;"></div>
<span class="t" style="left:74.5px;top:409.72px;letter-spacing:0.02px;color:#343434;">test for prototype</span>
<div style="left:230.4px;top:410.52px;width:7.2px;height:7.2px;background:#fff;border:1px solid #7a7a7a;box-sizing:border-box;"></div>
<div style="left:434.6px;top:410.52px;width:7.2px;height:7.2px;background:#fff;border:1px solid #7a7a7a;box-sizing:border-box;"></div>
<span class="t" style="left:251px;top:409.72px;letter-spacing:-0.32px;color:#343434;">05/02/2016 10:00</span>
<span class="t" style="left:309.6px;top:409.72px;letter-spacing:-0.32px;color:#343434;">05/02/2016 10:30</span>
<span class="t" style="left:452.7px;top:409.72px;letter-spacing:-0.3px;color:#343434;">Call</span>
<span class="t" style="left:565px;top:409.72px;letter-spacing:-0.29px;color:#343434;">Laura Davies</span>
<span class="t" style="left:634.4px;top:409.72px;letter-spacing:-0.29px;color:#343434;">Laura Davies</span>
<span class="t" style="left:704px;top:409.72px;letter-spacing:-0.29px;color:#343434;">Laura Davies</span>
<span class="t" style="left:898px;top:409.72px;letter-spacing:-0.07px;color:#589988;width:29.4px;overflow:hidden;">Complete</span>
<span class="t" style="left:930.6px;top:409.72px;letter-spacing:0.02px;color:#161616;">Normal</span>
<div style="left:52px;top:431.68px;width:5.8px;height:0.8px;background:#cfcfcf;"></div>
<span class="t" style="left:74.5px;top:422.03px;letter-spacing:0.02px;color:#343434;">test for prototype</span>
<div style="left:230.4px;top:422.83px;width:7.2px;height:7.2px;background:#fff;border:1px solid #7a7a7a;box-sizing:border-box;"></div>
<div style="left:434.6px;top:422.83px;width:7.2px;height:7.2px;background:#fff;border:1px solid #7a7a7a;box-sizing:border-box;"></div>
<span class="t" style="left:251px;top:422.03px;letter-spacing:-0.32px;color:#343434;">06/02/2016 10:00</span>
<span class="t" style="left:309.6px;top:422.03px;letter-spacing:-0.32px;color:#343434;">06/02/2016 10:30</span>
<span class="t" style="left:452.7px;top:422.03px;letter-spacing:-0.3px;color:#343434;">Call</span>
<span class="t" style="left:565px;top:422.03px;letter-spacing:-0.29px;color:#343434;">Laura Davies</span>
<span class="t" style="left:634.4px;top:422.03px;letter-spacing:-0.29px;color:#343434;">Laura Davies</span>
<span class="t" style="left:704px;top:422.03px;letter-spacing:-0.29px;color:#343434;">Laura Davies</span>
<span class="t" style="left:898px;top:422.03px;letter-spacing:-0.07px;color:#589988;width:29.4px;overflow:hidden;">Complete</span>
<span class="t" style="left:930.6px;top:422.03px;letter-spacing:0.02px;color:#161616;">Normal</span>
<div style="left:52px;top:443.99px;width:5.8px;height:0.8px;background:#cfcfcf;"></div>
<span class="t" style="left:74.5px;top:434.34px;letter-spacing:0.02px;color:#343434;">test for prototype</span>
<div style="left:230.4px;top:435.14px;width:7.2px;height:7.2px;background:#fff;border:1px solid #7a7a7a;box-sizing:border-box;"></div>
<div style="left:434.6px;top:435.14px;width:7.2px;height:7.2px;background:#fff;border:1px solid #7a7a7a;box-sizing:border-box;"></div>
<span class="t" style="left:251px;top:434.34px;letter-spacing:-0.32px;color:#343434;">07/02/2016 10:00</span>
<span class="t" style="left:309.6px;top:434.34px;letter-spacing:-0.32px;color:#343434;">07/02/2016 10:30</span>
<span class="t" style="left:452.7px;top:434.34px;letter-spacing:-0.3px;color:#343434;">Call</span>
<span class="t" style="left:565px;top:434.34px;letter-spacing:-0.29px;color:#343434;">Laura Davies</span>
<span class="t" style="left:634.4px;top:434.34px;letter-spacing:-0.29px;color:#343434;">Laura Davies</span>
<span class="t" style="left:704px;top:434.34px;letter-spacing:-0.29px;color:#343434;">Laura Davies</span>
<span class="t" style="left:898px;top:434.34px;letter-spacing:-0.07px;color:#589988;width:29.4px;overflow:hidden;">Complete</span>
<span class="t" style="left:930.6px;top:434.34px;letter-spacing:0.02px;color:#161616;">Normal</span>
<div style="left:52px;top:456.3px;width:5.8px;height:0.8px;background:#cfcfcf;"></div>
<span class="t" style="left:74.5px;top:446.65px;letter-spacing:0.02px;color:#343434;">test for prototype</span>
<div style="left:230.4px;top:447.45px;width:7.2px;height:7.2px;background:#fff;border:1px solid #7a7a7a;box-sizing:border-box;"></div>
<div style="left:434.6px;top:447.45px;width:7.2px;height:7.2px;background:#fff;border:1px solid #7a7a7a;box-sizing:border-box;"></div>
<span class="t" style="left:251px;top:446.65px;letter-spacing:-0.32px;color:#343434;">08/02/2016 10:00</span>
<span class="t" style="left:309.6px;top:446.65px;letter-spacing:-0.32px;color:#343434;">08/02/2016 10:30</span>
<span class="t" style="left:452.7px;top:446.65px;letter-spacing:-0.3px;color:#343434;">Call</span>
<span class="t" style="left:565px;top:446.65px;letter-spacing:-0.29px;color:#343434;">Laura Davies</span>
<span class="t" style="left:634.4px;top:446.65px;letter-spacing:-0.29px;color:#343434;">Laura Davies</span>
<span class="t" style="left:704px;top:446.65px;letter-spacing:-0.29px;color:#343434;">Laura Davies</span>
<span class="t" style="left:898px;top:446.65px;letter-spacing:-0.07px;color:#589988;width:29.4px;overflow:hidden;">Complete</span>
<span class="t" style="left:930.6px;top:446.65px;letter-spacing:0.02px;color:#161616;">Normal</span>
<div style="left:52px;top:468.61px;width:5.8px;height:0.8px;background:#cfcfcf;"></div>
<span class="t" style="left:74.5px;top:458.96px;letter-spacing:0.02px;color:#343434;">test for prototype</span>
<div style="left:230.4px;top:459.76px;width:7.2px;height:7.2px;background:#fff;border:1px solid #7a7a7a;box-sizing:border-box;"></div>
<div style="left:434.6px;top:459.76px;width:7.2px;height:7.2px;background:#fff;border:1px solid #7a7a7a;box-sizing:border-box;"></div>
<span class="t" style="left:251px;top:458.96px;letter-spacing:-0.32px;color:#343434;">09/02/2016 10:00</span>
<span class="t" style="left:309.6px;top:458.96px;letter-spacing:-0.32px;color:#343434;">09/02/2016 10:30</span>
<span class="t" style="left:452.7px;top:458.96px;letter-spacing:-0.3px;color:#343434;">Call</span>
<span class="t" style="left:565px;top:458.96px;letter-spacing:-0.29px;color:#343434;">Laura Davies</span>
<span class="t" style="left:634.4px;top:458.96px;letter-spacing:-0.29px;color:#343434;">Laura Davies</span>
<span class="t" style="left:704px;top:458.96px;letter-spacing:-0.29px;color:#343434;">Laura Davies</span>
<span class="t" style="left:898px;top:458.96px;letter-spacing:-0.07px;color:#589988;width:29.4px;overflow:hidden;">Complete</span>
<span class="t" style="left:930.6px;top:458.96px;letter-spacing:0.02px;color:#161616;">Normal</span>
<div style="left:52px;top:480.92px;width:5.8px;height:0.8px;background:#cfcfcf;"></div>
<span class="t" style="left:74.5px;top:471.26px;letter-spacing:0.02px;color:#343434;">test for prototype</span>
<div style="left:230.4px;top:472.06px;width:7.2px;height:7.2px;background:#fff;border:1px solid #7a7a7a;box-sizing:border-box;"></div>
<div style="left:434.6px;top:472.06px;width:7.2px;height:7.2px;background:#fff;border:1px solid #7a7a7a;box-sizing:border-box;"></div>
<span class="t" style="left:251px;top:471.26px;letter-spacing:-0.32px;color:#343434;">10/02/2016 10:00</span>
<span class="t" style="left:309.6px;top:471.26px;letter-spacing:-0.32px;color:#343434;">10/02/2016 10:30</span>
<span class="t" style="left:452.7px;top:471.26px;letter-spacing:-0.3px;color:#343434;">Call</span>
<span class="t" style="left:565px;top:471.26px;letter-spacing:-0.29px;color:#343434;">Laura Davies</span>
<span class="t" style="left:634.4px;top:471.26px;letter-spacing:-0.29px;color:#343434;">Laura Davies</span>
<span class="t" style="left:704px;top:471.26px;letter-spacing:-0.29px;color:#343434;">Laura Davies</span>
<span class="t" style="left:898px;top:471.26px;letter-spacing:-0.07px;color:#589988;width:29.4px;overflow:hidden;">Complete</span>
<span class="t" style="left:930.6px;top:471.26px;letter-spacing:0.02px;color:#161616;">Normal</span>
<div style="left:52px;top:493.23px;width:5.8px;height:0.8px;background:#cfcfcf;"></div>
<span class="t" style="left:74.5px;top:483.58px;letter-spacing:0.02px;color:#343434;">test for prototype</span>
<div style="left:230.4px;top:484.38px;width:7.2px;height:7.2px;background:#fff;border:1px solid #7a7a7a;box-sizing:border-box;"></div>
<div style="left:434.6px;top:484.38px;width:7.2px;height:7.2px;background:#fff;border:1px solid #7a7a7a;box-sizing:border-box;"></div>
<span class="t" style="left:251px;top:483.58px;letter-spacing:-0.28px;color:#343434;">11/02/2016 10:00</span>
<span class="t" style="left:309.6px;top:483.58px;letter-spacing:-0.28px;color:#343434;">11/02/2016 10:30</span>
<span class="t" style="left:452.7px;top:483.58px;letter-spacing:-0.3px;color:#343434;">Call</span>
<span class="t" style="left:565px;top:483.58px;letter-spacing:-0.29px;color:#343434;">Laura Davies</span>
<span class="t" style="left:634.4px;top:483.58px;letter-spacing:-0.29px;color:#343434;">Laura Davies</span>
<span class="t" style="left:704px;top:483.58px;letter-spacing:-0.29px;color:#343434;">Laura Davies</span>
<span class="t" style="left:898px;top:483.58px;letter-spacing:-0.07px;color:#589988;width:29.4px;overflow:hidden;">Complete</span>
<span class="t" style="left:930.6px;top:483.58px;letter-spacing:0.02px;color:#161616;">Normal</span>
<div style="left:52px;top:505.54px;width:5.8px;height:0.8px;background:#cfcfcf;"></div>
<span class="t" style="left:74.5px;top:495.88px;letter-spacing:0.02px;color:#343434;">test for prototype</span>
<div style="left:230.4px;top:496.69px;width:7.2px;height:7.2px;background:#fff;border:1px solid #7a7a7a;box-sizing:border-box;"></div>
<div style="left:434.6px;top:496.69px;width:7.2px;height:7.2px;background:#fff;border:1px solid #7a7a7a;box-sizing:border-box;"></div>
<span class="t" style="left:251px;top:495.88px;letter-spacing:-0.32px;color:#343434;">12/02/2016 10:00</span>
<span class="t" style="left:309.6px;top:495.88px;letter-spacing:-0.32px;color:#343434;">12/02/2016 10:30</span>
<span class="t" style="left:452.7px;top:495.88px;letter-spacing:-0.3px;color:#343434;">Call</span>
<span class="t" style="left:565px;top:495.88px;letter-spacing:-0.29px;color:#343434;">Laura Davies</span>
<span class="t" style="left:634.4px;top:495.88px;letter-spacing:-0.29px;color:#343434;">Laura Davies</span>
<span class="t" style="left:704px;top:495.88px;letter-spacing:-0.29px;color:#343434;">Laura Davies</span>
<span class="t" style="left:898px;top:495.88px;letter-spacing:-0.07px;color:#589988;width:29.4px;overflow:hidden;">Complete</span>
<span class="t" style="left:930.6px;top:495.88px;letter-spacing:0.02px;color:#161616;">Normal</span>
<div style="left:52px;top:517.85px;width:5.8px;height:0.8px;background:#cfcfcf;"></div>
<span class="t" style="left:74.5px;top:508.2px;letter-spacing:-0.1px;color:#343434;">test</span>
<svg style="left:61px;top:508px" width="8.8" height="8.8" viewBox="0 0 88 88"><circle cx="44" cy="44" r="36" fill="#fff" stroke="#86add8" stroke-width="13"/><rect x="38" y="36" width="13" height="28" fill="#86add8"/><circle cx="44" cy="25" r="7" fill="#86add8"/></svg>
<div style="left:230.4px;top:509px;width:7.2px;height:7.2px;background:#fff;border:1px solid #7a7a7a;box-sizing:border-box;"></div>
<div style="left:434.6px;top:509px;width:7.2px;height:7.2px;background:#fff;border:1px solid #7a7a7a;box-sizing:border-box;"></div>
<span class="t" style="left:251px;top:508.2px;letter-spacing:-0.28px;color:#343434;">12/02/2016 11:30</span>
<span class="t" style="left:309.6px;top:508.2px;letter-spacing:-0.32px;color:#343434;">12/02/2016 12:00</span>
<span class="t" style="left:452.7px;top:508.2px;letter-spacing:-0.3px;color:#343434;">Call</span>
<span class="t" style="left:565px;top:508.2px;letter-spacing:-0.24px;color:#343434;">David Pay</span>
<span class="t" style="left:634.4px;top:508.2px;letter-spacing:-0.24px;color:#343434;">David Pay</span>
<span class="t" style="left:704px;top:508.2px;letter-spacing:-0.24px;color:#343434;">David Pay</span>
<span class="t" style="left:898px;top:508.2px;letter-spacing:-0.07px;color:#589988;width:29.4px;overflow:hidden;">Complete</span>
<span class="t" style="left:930.6px;top:508.2px;letter-spacing:0.02px;color:#161616;">Normal</span>
<span class="t" style="left:963.9px;top:508.2px;letter-spacing:-0.3px;color:#343434;">1977 Design</span>
<div style="left:52px;top:530.16px;width:5.8px;height:0.8px;background:#cfcfcf;"></div>
<span class="t" style="left:74.5px;top:520.5px;letter-spacing:0.02px;color:#343434;">test for prototype</span>
<div style="left:230.4px;top:521.3px;width:7.2px;height:7.2px;background:#fff;border:1px solid #7a7a7a;box-sizing:border-box;"></div>
<div style="left:434.6px;top:521.3px;width:7.2px;height:7.2px;background:#fff;border:1px solid #7a7a7a;box-sizing:border-box;"></div>
<span class="t" style="left:251px;top:520.5px;letter-spacing:-0.32px;color:#343434;">13/02/2016 10:00</span>
<span class="t" style="left:309.6px;top:520.5px;letter-spacing:-0.32px;color:#343434;">13/02/2016 10:30</span>
<span class="t" style="left:452.7px;top:520.5px;letter-spacing:-0.3px;color:#343434;">Call</span>
<span class="t" style="left:565px;top:520.5px;letter-spacing:-0.29px;color:#343434;">Laura Davies</span>
<span class="t" style="left:634.4px;top:520.5px;letter-spacing:-0.29px;color:#343434;">Laura Davies</span>
<span class="t" style="left:704px;top:520.5px;letter-spacing:-0.29px;color:#343434;">Laura Davies</span>
<span class="t" style="left:898px;top:520.5px;letter-spacing:-0.07px;color:#589988;width:29.4px;overflow:hidden;">Complete</span>
<span class="t" style="left:930.6px;top:520.5px;letter-spacing:0.02px;color:#161616;">Normal</span>
<div style="left:52px;top:542.47px;width:5.8px;height:0.8px;background:#cfcfcf;"></div>
<span class="t" style="left:74.5px;top:532.82px;letter-spacing:0.02px;color:#343434;">test for prototype</span>
<div style="left:230.4px;top:533.62px;width:7.2px;height:7.2px;background:#fff;border:1px solid #7a7a7a;box-sizing:border-box;"></div>
<div style="left:434.6px;top:533.62px;width:7.2px;height:7.2px;background:#fff;border:1px solid #7a7a7a;box-sizing:border-box;"></div>
<span class="t" style="left:251px;top:532.82px;letter-spacing:-0.32px;color:#343434;">14/02/2016 10:00</span>
<span class="t" style="left:309.6px;top:532.82px;letter-spacing:-0.32px;color:#343434;">14/02/2016 10:30</span>
<span class="t" style="left:452.7px;top:532.82px;letter-spacing:-0.3px;color:#343434;">Call</span>
<span class="t" style="left:565px;top:532.82px;letter-spacing:-0.29px;color:#343434;">Laura Davies</span>
<span class="t" style="left:634.4px;top:532.82px;letter-spacing:-0.29px;color:#343434;">Laura Davies</span>
<span class="t" style="left:704px;top:532.82px;letter-spacing:-0.29px;color:#343434;">Laura Davies</span>
<span class="t" style="left:898px;top:532.82px;letter-spacing:-0.07px;color:#589988;width:29.4px;overflow:hidden;">Complete</span>
<span class="t" style="left:930.6px;top:532.82px;letter-spacing:0.02px;color:#161616;">Normal</span>
<div style="left:52px;top:554.78px;width:5.8px;height:0.8px;background:#cfcfcf;"></div>
<span class="t" style="left:74.5px;top:545.12px;letter-spacing:0.02px;color:#343434;">test for prototype</span>
<div style="left:230.4px;top:545.92px;width:7.2px;height:7.2px;background:#fff;border:1px solid #7a7a7a;box-sizing:border-box;"></div>
<div style="left:434.6px;top:545.92px;width:7.2px;height:7.2px;background:#fff;border:1px solid #7a7a7a;box-sizing:border-box;"></div>
<span class="t" style="left:251px;top:545.12px;letter-spacing:-0.32px;color:#343434;">15/02/2016 10:00</span>
<span class="t" style="left:309.6px;top:545.12px;letter-spacing:-0.32px;color:#343434;">15/02/2016 10:30</span>
<span class="t" style="left:452.7px;top:545.12px;letter-spacing:-0.3px;color:#343434;">Call</span>
<span class="t" style="left:565px;top:545.12px;letter-spacing:-0.29px;color:#343434;">Laura Davies</span>
<span class="t" style="left:634.4px;top:545.12px;letter-spacing:-0.29px;color:#343434;">Laura Davies</span>
<span class="t" style="left:704px;top:545.12px;letter-spacing:-0.29px;color:#343434;">Laura Davies</span>
<span class="t" style="left:898px;top:545.12px;letter-spacing:-0.07px;color:#589988;width:29.4px;overflow:hidden;">Complete</span>
<span class="t" style="left:930.6px;top:545.12px;letter-spacing:0.02px;color:#161616;">Normal</span>
<div style="left:52px;top:567.09px;width:5.8px;height:0.8px;background:#cfcfcf;"></div>
<span class="t" style="left:74.5px;top:557.44px;letter-spacing:0.02px;color:#343434;">test for prototype</span>
<div style="left:230.4px;top:558.24px;width:7.2px;height:7.2px;background:#fff;border:1px solid #7a7a7a;box-sizing:border-box;"></div>
<div style="left:434.6px;top:558.24px;width:7.2px;height:7.2px;background:#fff;border:1px solid #7a7a7a;box-sizing:border-box;"></div>
<span class="t" style="left:251px;top:557.44px;letter-spacing:-0.32px;color:#343434;">16/02/2016 10:00</span>
<span class="t" style="left:309.6px;top:557.44px;letter-spacing:-0.32px;color:#343434;">16/02/2016 10:30</span>
<span class="t" style="left:452.7px;top:557.44px;letter-spacing:-0.3px;color:#343434;">Call</span>
<span class="t" style="left:565px;top:557.44px;letter-spacing:-0.29px;color:#343434;">Laura Davies</span>
<span class="t" style="left:634.4px;top:557.44px;letter-spacing:-0.29px;color:#343434;">Laura Davies</span>
<span class="t" style="left:704px;top:557.44px;letter-spacing:-0.29px;color:#343434;">Laura Davies</span>
<span class="t" style="left:898px;top:557.44px;letter-spacing:-0.07px;color:#589988;width:29.4px;overflow:hidden;">Complete</span>
<span class="t" style="left:930.6px;top:557.44px;letter-spacing:0.02px;color:#161616;">Normal</span>
<div style="left:52px;top:579.4px;width:5.8px;height:0.8px;background:#cfcfcf;"></div>
<span class="t" style="left:74.5px;top:569.75px;letter-spacing:0.02px;color:#343434;">test for prototype</span>
<div style="left:230.4px;top:570.54px;width:7.2px;height:7.2px;background:#fff;border:1px solid #7a7a7a;box-sizing:border-box;"></div>
<div style="left:434.6px;top:570.54px;width:7.2px;height:7.2px;background:#fff;border:1px solid #7a7a7a;box-sizing:border-box;"></div>
<span class="t" style="left:251px;top:569.75px;letter-spacing:-0.32px;color:#343434;">17/02/2016 10:00</span>
<span class="t" style="left:309.6px;top:569.75px;letter-spacing:-0.32px;color:#343434;">17/02/2016 10:30</span>
<span class="t" style="left:452.7px;top:569.75px;letter-spacing:-0.3px;color:#343434;">Call</span>
<span class="t" style="left:565px;top:569.75px;letter-spacing:-0.29px;color:#343434;">Laura Davies</span>
<span class="t" style="left:634.4px;top:569.75px;letter-spacing:-0.29px;color:#343434;">Laura Davies</span>
<span class="t" style="left:704px;top:569.75px;letter-spacing:-0.29px;color:#343434;">Laura Davies</span>
<span class="t" style="left:898px;top:569.75px;letter-spacing:-0.07px;color:#589988;width:29.4px;overflow:hidden;">Complete</span>
<span class="t" style="left:930.6px;top:569.75px;letter-spacing:0.02px;color:#161616;">Normal</span>
<div style="left:52px;top:591.71px;width:5.8px;height:0.8px;background:#cfcfcf;"></div>
<span class="t" style="left:74.5px;top:582.06px;letter-spacing:0.02px;color:#343434;">test for prototype</span>
<div style="left:230.4px;top:582.86px;width:7.2px;height:7.2px;background:#fff;border:1px solid #7a7a7a;box-sizing:border-box;"></div>
<div style="left:434.6px;top:582.86px;width:7.2px;height:7.2px;background:#fff;border:1px solid #7a7a7a;box-sizing:border-box;"></div>
<span class="t" style="left:251px;top:582.06px;letter-spacing:-0.32px;color:#343434;">18/02/2016 10:00</span>
<span class="t" style="left:309.6px;top:582.06px;letter-spacing:-0.32px;color:#343434;">18/02/2016 10:30</span>
<span class="t" style="left:452.7px;top:582.06px;letter-spacing:-0.3px;color:#343434;">Call</span>
<span class="t" style="left:565px;top:582.06px;letter-spacing:-0.29px;color:#343434;">Laura Davies</span>
<span class="t" style="left:634.4px;top:582.06px;letter-spacing:-0.29px;color:#343434;">Laura Davies</span>
<span class="t" style="left:704px;top:582.06px;letter-spacing:-0.29px;color:#343434;">Laura Davies</span>
<span class="t" style="left:898px;top:582.06px;letter-spacing:-0.07px;color:#589988;width:29.4px;overflow:hidden;">Complete</span>
<span class="t" style="left:930.6px;top:582.06px;letter-spacing:0.02px;color:#161616;">Normal</span>
<div style="left:52px;top:604.02px;width:5.8px;height:0.8px;background:#cfcfcf;"></div>
<span class="t" style="left:74.5px;top:594.37px;letter-spacing:-0.16px;color:#343434;">test call - Jeremiah White</span>
<svg style="left:61px;top:594.16px" width="8.8" height="8.8" viewBox="0 0 88 88"><circle cx="44" cy="44" r="36" fill="#fff" stroke="#86add8" stroke-width="13"/><rect x="38" y="36" width="13" height="28" fill="#86add8"/><circle cx="44" cy="25" r="7" fill="#86add8"/></svg>
<div style="left:230.4px;top:595.16px;width:7.2px;height:7.2px;background:#fff;border:1px solid #7a7a7a;box-sizing:border-box;"></div>
<div style="left:434.6px;top:595.16px;width:7.2px;height:7.2px;background:#fff;border:1px solid #7a7a7a;box-sizing:border-box;"></div>
<span class="t" style="left:251px;top:594.37px;letter-spacing:-0.32px;color:#343434;">18/02/2016 13:30</span>
<span class="t" style="left:309.6px;top:594.37px;letter-spacing:-0.32px;color:#343434;">18/02/2016 14:00</span>
<span class="t" style="left:452.7px;top:594.37px;letter-spacing:-0.3px;color:#343434;">Call</span>
<span class="t" style="left:565px;top:594.37px;letter-spacing:-0.24px;color:#343434;">David Pay</span>
<span class="t" style="left:634.4px;top:594.37px;letter-spacing:-0.24px;color:#343434;">David Pay</span>
<span class="t" style="left:704px;top:594.37px;letter-spacing:-0.24px;color:#343434;">David Pay</span>
<span class="t" style="left:898px;top:594.37px;letter-spacing:-0.07px;color:#589988;width:29.4px;overflow:hidden;">Complete</span>
<span class="t" style="left:930.6px;top:594.37px;letter-spacing:0.02px;color:#161616;">Normal</span>
<span class="t" style="left:963.9px;top:594.37px;letter-spacing:-0.16px;color:#343434;">Yewlands Academy</span>
<span class="t" style="left:1046.7px;top:594.37px;letter-spacing:-0.41px;color:#343434;">John James</span>
<div style="left:52px;top:616.33px;width:5.8px;height:0.8px;background:#cfcfcf;"></div>
<span class="t" style="left:74.5px;top:606.68px;letter-spacing:0.02px;color:#343434;">test for prototype</span>
<div style="left:230.4px;top:607.48px;width:7.2px;height:7.2px;background:#fff;border:1px solid #7a7a7a;box-sizing:border-box;"></div>
<div style="left:434.6px;top:607.48px;width:7.2px;height:7.2px;background:#fff;border:1px solid #7a7a7a;box-sizing:border-box;"></div>
<span class="t" style="left:251px;top:606.68px;letter-spacing:-0.32px;color:#343434;">19/02/2016 10:00</span>
<span class="t" style="left:309.6px;top:606.68px;letter-spacing:-0.32px;color:#343434;">19/02/2016 10:30</span>
<span class="t" style="left:452.7px;top:606.68px;letter-spacing:-0.3px;color:#343434;">Call</span>
<span class="t" style="left:565px;top:606.68px;letter-spacing:-0.29px;color:#343434;">Laura Davies</span>
<span class="t" style="left:634.4px;top:606.68px;letter-spacing:-0.29px;color:#343434;">Laura Davies</span>
<span class="t" style="left:704px;top:606.68px;letter-spacing:-0.29px;color:#343434;">Laura Davies</span>
<span class="t" style="left:898px;top:606.68px;letter-spacing:-0.07px;color:#589988;width:29.4px;overflow:hidden;">Complete</span>
<span class="t" style="left:930.6px;top:606.68px;letter-spacing:0.02px;color:#161616;">Normal</span>
<div style="left:52px;top:628.64px;width:5.8px;height:0.8px;background:#cfcfcf;"></div>
<span class="t" style="left:74.5px;top:618.99px;letter-spacing:0.02px;color:#343434;">test for prototype</span>
<div style="left:230.4px;top:619.78px;width:7.2px;height:7.2px;background:#fff;border:1px solid #7a7a7a;box-sizing:border-box;"></div>
<div style="left:434.6px;top:619.78px;width:7.2px;height:7.2px;background:#fff;border:1px solid #7a7a7a;box-sizing:border-box;"></div>
<span class="t" style="left:251px;top:618.99px;letter-spacing:-0.32px;color:#343434;">20/02/2016 10:00</span>
<span class="t" style="left:309.6px;top:618.99px;letter-spacing:-0.32px;color:#343434;">20/02/2016 10:30</span>
<span class="t" style="left:452.7px;top:618.99px;letter-spacing:-0.3px;color:#343434;">Call</span>
<span class="t" style="left:565px;top:618.99px;letter-spacing:-0.29px;color:#343434;">Laura Davies</span>
<span class="t" style="left:634.4px;top:618.99px;letter-spacing:-0.29px;color:#343434;">Laura Davies</span>
<span class="t" style="left:704px;top:618.99px;letter-spacing:-0.29px;color:#343434;">Laura Davies</span>
<span class="t" style="left:898px;top:618.99px;letter-spacing:-0.07px;color:#589988;width:29.4px;overflow:hidden;">Complete</span>
<span class="t" style="left:930.6px;top:618.99px;letter-spacing:0.02px;color:#161616;">Normal</span>
<span class="t" style="left:74.5px;top:631.29px;letter-spacing:0.02px;color:#343434;">test for prototype</span>
<div style="left:230.4px;top:632.09px;width:7.2px;height:7.2px;background:#fff;border:1px solid #7a7a7a;box-sizing:border-box;"></div>
<div style="left:434.6px;top:632.09px;width:7.2px;height:7.2px;background:#fff;border:1px solid #7a7a7a;box-sizing:border-box;"></div>
<span class="t" style="left:251px;top:631.29px;letter-spacing:-0.32px;color:#343434;">21/02/2016 10:00</span>
<span class="t" style="left:309.6px;top:631.29px;letter-spacing:-0.32px;color:#343434;">21/02/2016 10:30</span>
<span class="t" style="left:452.7px;top:631.29px;letter-spacing:-0.3px;color:#343434;">Call</span>
<span class="t" style="left:565px;top:631.29px;letter-spacing:-0.29px;color:#343434;">Laura Davies</span>
<span class="t" style="left:634.4px;top:631.29px;letter-spacing:-0.29px;color:#343434;">Laura Davies</span>
<span class="t" style="left:704px;top:631.29px;letter-spacing:-0.29px;color:#343434;">Laura Davies</span>
<span class="t" style="left:898px;top:631.29px;letter-spacing:-0.07px;color:#589988;width:29.4px;overflow:hidden;">Complete</span>
<span class="t" style="left:930.6px;top:631.29px;letter-spacing:0.02px;color:#161616;">Normal</span>
<div style="left:58px;top:321.4px;width:1px;height:319.2px;background:#dedede;"></div>
<div style="left:72.4px;top:321.4px;width:1px;height:319.2px;background:#eeeeee;"></div>
<div style="left:220px;top:321.4px;width:1px;height:319.2px;background:#eeeeee;"></div>
<div style="left:248.6px;top:321.4px;width:1px;height:319.2px;background:#eeeeee;"></div>
<div style="left:307.4px;top:321.4px;width:1px;height:319.2px;background:#eeeeee;"></div>
<div style="left:367px;top:321.4px;width:1px;height:319.2px;background:#eeeeee;"></div>
<div style="left:426.7px;top:321.4px;width:1px;height:319.2px;background:#eeeeee;"></div>
<div style="left:450px;top:321.4px;width:1px;height:319.2px;background:#eeeeee;"></div>
<div style="left:507.5px;top:321.4px;width:1px;height:319.2px;background:#eeeeee;"></div>
<div style="left:563.6px;top:321.4px;width:1px;height:319.2px;background:#eeeeee;"></div>
<div style="left:633px;top:321.4px;width:1px;height:319.2px;background:#eeeeee;"></div>
<div style="left:702.2px;top:321.4px;width:1px;height:319.2px;background:#eeeeee;"></div>
<div style="left:895.6px;top:321.4px;width:1px;height:319.2px;background:#eeeeee;"></div>
<div style="left:928.4px;top:321.4px;width:1px;height:319.2px;background:#eeeeee;"></div>
<div style="left:961.5px;top:321.4px;width:1px;height:319.2px;background:#eeeeee;"></div>
<div style="left:1044.4px;top:321.4px;width:1px;height:319.2px;background:#eeeeee;"></div>
<div style="left:1128.9px;top:321.4px;width:1px;height:319.2px;background:#eeeeee;"></div>
<svg style="left:1170.5px;top:302.8px" width="5.6" height="3.6" viewBox="0 0 56 36"><path d="M5 30L28 8L51 30" fill="none" stroke="#4a4a4a" stroke-width="13"/></svg>
<svg style="left:1170.5px;top:633.8px" width="5.6" height="3.6" viewBox="0 0 56 36"><path d="M5 6L28 28L51 6" fill="none" stroke="#4a4a4a" stroke-width="13"/></svg>
<div style="left:50px;top:336.6px;width:135.6px;height:10.9px;background:#fff;border:1px solid #c2c2c2;box-sizing:border-box;box-shadow:0.5px 1px 1.2px rgba(0,0,0,.4);"></div>
<span class="t" style="left:51.6px;top:337.6px;letter-spacing:-0.16px;color:#111;font-weight:bold;">Click here to show/hide/move columns</span>
<svg style="left:0;top:0" width="1183" height="644" viewBox="0 0 1183 644"><path d="M15.4 14.2A3.7 3.7 0 1 0 15.4 19.9" fill="none" stroke="#6a2a86" stroke-width="1.3"/><circle cx="15.5" cy="17" r="1.6" fill="#e8206a"/><rect x="1052.8" y="4.2" width="27" height="14.6" fill="#843f7f"/><rect x="1060.8" y="8.1" width="8.6" height="5.2" rx="0.6" fill="none" stroke="#c9b3c8" stroke-width="0.9"/><circle cx="1068.8" cy="11.6" r="1.4" fill="#b59ab4"/><path d="M1120.3 15.8H1126.2" stroke="#f4ecf4" stroke-width="1.3"/><path d="M1143.2 12.6V11.2H1148.3V15.6H1146.8" fill="none" stroke="#e6d6e5" stroke-width="0.9"/><rect x="1141.5" y="12.6" width="5.1" height="4.3" fill="#80397b" stroke="#f0e6f0" stroke-width="1"/><path d="M1164.5 11.6L1169.7 16.8M1169.7 11.6L1164.5 16.8" stroke="#fff" stroke-width="1.4"/><path d="M28 66.6C28 63.4 29.6 61 32.4 60.2C34.8 59.8 36.8 61.4 36.8 63.6C36.2 65.6 33.6 67 31 67C29.8 67 28.6 66.9 28 66.6z" fill="#7fa7d0"/><circle cx="30.2" cy="52" r="6.1" fill="#f6d4cd"/><path d="M24.2 51.2A6.1 6.1 0 0 1 36.3 52C36.3 53.2 36.1 54.2 35.7 55C32.4 54.4 29.4 53 27.4 50.4C26.2 50.5 25 50.8 24.2 51.2z" fill="#cbb49e"/><path d="M13.8 60.9C11.6 62 10.4 64.2 11.2 66.6C11.8 68.4 13.4 69.6 15.4 70" fill="none" stroke="#a3a3a3" stroke-width="1.9"/><path d="M24.6 60.9C26.8 62 28.0 64.2 27.2 66.6C26.6 68.4 25.0 69.6 23.0 70" fill="none" stroke="#a3a3a3" stroke-width="1.9"/><path d="M18.1 60.6h2.2l0.7 7.4l-1.8 2.2l-1.8-2.2z" fill="#7fa7d0"/><circle cx="19.2" cy="53.9" r="6.9" fill="#f6d4cd" stroke="#fff" stroke-width="0.5"/><path d="M52.6 54.3H60.5V58.9H51.2V55.7A1.4 1.4 0 0 1 52.6 54.3z" fill="#4f86c6"/><path d="M51.8 58V69A1.4 1.4 0 0 0 53.2 70.4H67.4A1.4 1.4 0 0 0 68.8 69V61" fill="none" stroke="#8a8a8a" stroke-width="1.5"/><rect x="54.4" y="51.4" width="1.6" height="4.2" fill="#8a8a8a"/><rect x="58.2" y="51.4" width="1.6" height="4.2" fill="#8a8a8a"/><text x="60.3" y="69" font-family="Liberation Sans, sans-serif" font-size="11" font-weight="bold" fill="#8a8a8a" text-anchor="middle" textLength="13" lengthAdjust="spacingAndGlyphs">12</text><circle cx="69.2" cy="53.9" r="6.5" fill="#d5e9f9" stroke="#8a8a8a" stroke-width="1.5"/><path d="M66.4 50.2L69.3 54.6L72.6 51.8" fill="none" stroke="#4f86c6" stroke-width="1.9" stroke-linejoin="round"/><path d="M92.2 46.4V69.6H116.8" fill="none" stroke="#9c9c9c" stroke-width="1.7"/><path d="M94.1 58.9L96.8 53.9L100.2 57.9L103.9 53.5L107.6 55.6L111.4 48.8L115.1 50.3" fill="none" stroke="#f3dba6" stroke-width="1.9" stroke-linejoin="round"/><path d="M94.1 64.3L96.5 63.3L100.2 65L103.9 61.3L107.6 63L111.7 59.6L115.1 61.5" fill="none" stroke="#7fa7d0" stroke-width="1.9" stroke-linejoin="round"/><path d="M142.60 57.80L142.60 70.30A12.5 12.5 0 0 1 135.61 47.44z" fill="#7fa7d0"/><path d="M144.00 56.80L137.01 46.44A12.5 12.5 0 0 1 156.50 56.80z" fill="#f3dba6"/><path d="M144.10 58.30L156.60 58.30A12.5 12.5 0 0 1 144.10 70.80z" fill="#a6a6a6"/><path d="M178.5 56.2A5.6 1.9 0 0 1 189.7 56.2V58.6A5.6 1.9 0 0 1 178.5 58.6z" fill="#f3dba6" stroke="#fff" stroke-width="0.8"/><path d="M178.5 52.9A5.6 1.9 0 0 1 189.7 52.9V55.3A5.6 1.9 0 0 1 178.5 55.3z" fill="#f3dba6" stroke="#fff" stroke-width="0.8"/><path d="M178.5 49.6A5.6 1.9 0 0 1 189.7 49.6V52.0A5.6 1.9 0 0 1 178.5 52.0z" fill="#f3dba6" stroke="#fff" stroke-width="0.8"/><path d="M178.5 46.3A5.6 1.9 0 0 1 189.7 46.3V48.7A5.6 1.9 0 0 1 178.5 48.7z" fill="#f3dba6" stroke="#fff" stroke-width="0.8"/><path d="M169.1 65.6A5.5 1.9 0 0 1 180.2 65.6V68.0A5.5 1.9 0 0 1 169.1 68.0z" fill="#f3dba6" stroke="#fff" stroke-width="0.8"/><path d="M169.1 62.3A5.5 1.9 0 0 1 180.2 62.3V64.7A5.5 1.9 0 0 1 169.1 64.7z" fill="#f3dba6" stroke="#fff" stroke-width="0.8"/><path d="M169.1 59.0A5.5 1.9 0 0 1 180.2 59.0V61.4A5.5 1.9 0 0 1 169.1 61.4z" fill="#f3dba6" stroke="#fff" stroke-width="0.8"/><path d="M183.9 67.2A5.6 1.9 0 0 1 195.1 67.2V69.6A5.6 1.9 0 0 1 183.9 69.6z" fill="#f3dba6" stroke="#fff" stroke-width="0.8"/><path d="M183.9 63.9A5.6 1.9 0 0 1 195.1 63.9V66.3A5.6 1.9 0 0 1 183.9 66.3z" fill="#f3dba6" stroke="#fff" stroke-width="0.8"/><path d="M183.9 60.6A5.6 1.9 0 0 1 195.1 60.6V63.0A5.6 1.9 0 0 1 183.9 63.0z" fill="#f3dba6" stroke="#fff" stroke-width="0.8"/><path d="M183.9 57.3A5.6 1.9 0 0 1 195.1 57.3V59.7A5.6 1.9 0 0 1 183.9 59.7z" fill="#f3dba6" stroke="#fff" stroke-width="0.8"/><rect x="210" y="44.9" width="22.0" height="25.4" fill="#f3dba6"/><rect x="211.6" y="46.4" width="18.8" height="2.6" fill="#fff"/><rect x="211.6" y="50.3" width="8.8" height="3.6" fill="#f8ebcd"/><rect x="222.5" y="50.599999999999994" width="7.9" height="3.0" fill="#fff"/><rect x="211.6" y="55.1" width="18.8" height="3.7" fill="#fff"/><rect x="211.6" y="60.0" width="8.8" height="3.9" fill="#f8ebcd"/><rect x="222.5" y="60.3" width="7.9" height="3.3" fill="#fff"/><rect x="211.6" y="65.2" width="18.8" height="3.5" fill="#fff"/><rect x="251.4" y="44.9" width="21.8" height="25.4" fill="#7fa7d0"/><rect x="253.0" y="46.4" width="18.6" height="2.6" fill="#fff"/><rect x="253.0" y="50.3" width="8.7" height="3.6" fill="#b9cfe8"/><rect x="263.8" y="50.599999999999994" width="7.8" height="3.0" fill="#fff"/><rect x="253.0" y="55.1" width="18.6" height="3.7" fill="#fff"/><rect x="253.0" y="60.0" width="8.7" height="3.9" fill="#b9cfe8"/><rect x="263.8" y="60.3" width="7.8" height="3.3" fill="#fff"/><rect x="253.0" y="65.2" width="18.6" height="3.5" fill="#fff"/><rect x="416.4" y="44.9" width="21.7" height="25.4" fill="#9dc6b6"/><rect x="418.0" y="46.4" width="18.5" height="2.6" fill="#fff"/><rect x="418.0" y="50.3" width="8.7" height="3.6" fill="#cfe3da"/><rect x="428.7" y="50.599999999999994" width="7.8" height="3.0" fill="#fff"/><rect x="418.0" y="55.1" width="18.5" height="3.7" fill="#fff"/><rect x="418.0" y="60.0" width="8.7" height="3.9" fill="#cfe3da"/><rect x="428.7" y="60.3" width="7.8" height="3.3" fill="#fff"/><rect x="418.0" y="65.2" width="18.5" height="3.5" fill="#fff"/><path d="M303.6 46.8L313.7 52.5V64.7L303.6 69.7L293.1 64.7V52.5z M293.1 52.5L303.6 57.6L313.7 52.5M303.6 57.6V69.7" fill="none" stroke="#f3dba6" stroke-width="1.6" stroke-linejoin="round"/><path d="M306.4 48.7L310.4 51L300.2 56.4V60.3L296.2 58.3V54.3z" fill="#a4a4a4"/><path d="M350.1 45.1h4.1l0.7 15.4h-5.5z" fill="#a6a6a6"/><path d="M331.3 70.1V59.6L336.2 56.4V59.4L341.6 56.2V59.4L347.2 56V61.6H356.7V70.1z" fill="#efabb9"/><path d="M333 64.2h3.6m1.2 0h3.6m1.2 0h3.6" stroke="#fff" stroke-width="1.1" fill="none"/><rect x="374.8" y="53.2" width="16.2" height="9.1" fill="#7fa7d0"/><path d="M392 55.4H397.2C399.6 55.6 401.2 58.4 401.2 60.6V64.8H392z" fill="#a3a3a3"/><path d="M394.6 57.2H397.2C398.4 57.4 399.4 59 399.5 60.4H394.6z" fill="#fff"/><rect x="387.4" y="64.2" width="4.4" height="1.5" fill="#a3a3a3"/><circle cx="378.2" cy="66.1" r="2" fill="#fff" stroke="#a3a3a3" stroke-width="1.4"/><circle cx="383.9" cy="66.1" r="2" fill="#fff" stroke="#a3a3a3" stroke-width="1.4"/><circle cx="396.4" cy="66.1" r="2" fill="#fff" stroke="#a3a3a3" stroke-width="1.4"/><rect x="460.8" y="46.4" width="26.4" height="22.3" fill="#a8a8a8"/><path d="M466.2 46.4H481.8L487.2 51.2V63.9L481.8 68.7H466.2L460.8 63.9V51.2z" fill="#7fa7d0"/><path d="M468.2 50.2H479.7V54.6L483 57.5V60L479 64.3H468.2z" fill="#fff"/><path d="M475.1 60.6L483.4 53.4L485.6 55.8L477.3 63L474.6 63.4z" fill="#a3a3a3"/><circle cx="518.5" cy="57.65" r="13.1" fill="#7fa7d0"/><clipPath id="gl"><circle cx="518.5" cy="57.65" r="13.1"/></clipPath><g clip-path="url(#gl)" fill="#f5dfae" stroke="#f5dfae" stroke-width="0.6" stroke-linejoin="round"><path d="M514.4 45.0L519.9 44.5L521.4 46.2L516.9 48.2L513.2 49.5L510.2 52.4L507.5 55.3L504.7 55.7L505.0 51.4L508.4 47.0z"/><path d="M523.9 46.2L528.1 47.2L531.1 50.7L532.8 54.9L531.3 58.4L529.3 61.6L527.1 65.4L524.8 67.1L523.8 63.9L523.4 61.1L520.9 59.5L518.3 58.0L517.5 55.9L518.3 53.0L519.8 50.5L521.9 48.9z"/><path d="M504.7 58.1L509.9 58.3L514.5 60.9L515.0 62.9L513.5 66.0L511.7 68.6L509.7 66.1L507.5 63.1L505.5 60.9z"/></g><path d="M521.4 52.2C523.6 51.2 526.6 52 527.6 53" stroke="#fbf0d8" stroke-width="1" fill="none"/><path d="M513 49.4L516.4 47.6" stroke="#eef3f8" stroke-width="0.8" fill="none"/><rect x="547.6" y="46.8" width="4.4" height="21.4" fill="#7fa7d0"/><rect x="555" y="52.5" width="4.1" height="15.7" fill="#7fa7d0"/><rect x="562.4" y="54.2" width="4.1" height="14.0" fill="#7fa7d0"/><rect x="545.2" y="52.8" width="4.7" height="15.6" fill="#f3dba6"/><rect x="552.6" y="57.9" width="4.4" height="10.5" fill="#f3dba6"/><rect x="560" y="59.6" width="4.5" height="8.8" fill="#f3dba6"/><path d="M543.5 46.4V69.6H568.5" fill="none" stroke="#a8a8a8" stroke-width="1.8"/><circle cx="1067.3" cy="57.8" r="11.95" fill="#fff" stroke="#7fa7d0" stroke-width="1.5"/><circle cx="1067.3" cy="51.6" r="2.8" fill="#7fa7d0"/><path d="M1063.8 56.4h5.4v8.6h2v1.9h-7.6v-1.9h2v-6.7h-1.8z" fill="#7fa7d0"/><circle cx="1076.1" cy="49.2" r="6.5" fill="#efabb9" stroke="#fff" stroke-width="0.8"/><text x="1076.1" y="52.4" font-family="Liberation Sans, sans-serif" font-size="8.6" font-weight="bold" fill="#fff" text-anchor="middle">1</text><g transform="rotate(-43.2 1121.6 58.6)"><rect x="1109.4" y="56.2" width="24.4" height="4.8" fill="#fff" stroke="#a6a6a6" stroke-width="1"/><rect x="1113.4" y="56.2" width="16.4" height="4.8" fill="#a6a6a6"/></g><polygon points="1113.80,44.00 1115.33,48.09 1119.70,48.28 1116.28,51.00 1117.44,55.22 1113.80,52.80 1110.16,55.22 1111.32,51.00 1107.90,48.28 1112.27,48.09" fill="#f3dba6"/><polygon points="1122.80,43.20 1123.59,45.31 1125.84,45.41 1124.08,46.82 1124.68,48.99 1122.80,47.74 1120.92,48.99 1121.52,46.82 1119.76,45.41 1122.01,45.31" fill="#f3dba6"/><circle cx="1162.1" cy="57.8" r="11.9" fill="#fff" stroke="#7fa7d0" stroke-width="1.5"/><text x="1162.1" y="66.2" font-family="Liberation Sans, sans-serif" font-size="23.5" font-weight="bold" fill="#7fa7d0" text-anchor="middle">?</text><path d="M22.1 105.4C18.5 106.2 16.5 108.8 17.3 111.6C18.1 114.0 20.7 115.2 23.3 115.5" fill="none" stroke="#a3a3a3" stroke-width="1.8"/><path d="M30.1 105.4C33.7 106.2 35.7 108.8 34.9 111.6C34.1 114.0 31.5 115.2 28.9 115.5" fill="none" stroke="#a3a3a3" stroke-width="1.8"/><path d="M25.0 105.4h2.2l0.7 8.2l-1.8 2.2l-1.8-2.2z" fill="#7fa7d0"/><circle cx="26.1" cy="97.6" r="7.5" fill="#f6d4cd"/><path d="M32.2 104.7h4.3v4.25h4.25v4.3h-4.25v4.25h-4.3v-4.25h-4.25v-4.3h4.25z" fill="#b3d285"/><path d="M22.1 147.9C18.5 148.7 16.5 151.3 17.3 154.1C18.1 156.5 20.7 157.7 23.3 158.0" fill="none" stroke="#a3a3a3" stroke-width="1.8"/><path d="M30.1 147.9C33.7 148.7 35.7 151.3 34.9 154.1C34.1 156.5 31.5 157.7 28.9 158.0" fill="none" stroke="#a3a3a3" stroke-width="1.8"/><path d="M25.0 147.9h2.2l0.7 8.2l-1.8 2.2l-1.8-2.2z" fill="#7fa7d0"/><circle cx="26.1" cy="140.1" r="7.5" fill="#f6d4cd"/><circle cx="32.6" cy="151.9" r="4.1" fill="#f2f2f2" stroke="#a8a8a8" stroke-width="1.2"/><path d="M35.9 155.6L39.9 159.8" stroke="#f3dba6" stroke-width="2.4" stroke-linecap="round"/><rect x="16.9" y="180.2" width="18.9" height="21.8" rx="0.8" fill="#f3dba6"/><rect x="19" y="181.3" width="14.6" height="17.1" fill="#f4f4f4"/><path d="M20.9 185.2h4.9M20.9 189h10.6M20.9 192.6h10.6M20.9 196.3h10.6" stroke="#8e8e8e" stroke-width="1"/><path d="M20.5 182.4V179.4C20.5 178.2 21.6 177.9 23 177.8C23.6 176.2 25 175.5 26.1 175.5C27.2 175.5 28.6 176.2 29.2 177.8C30.6 177.9 31.7 178.2 31.7 179.4V182.4z" fill="#f1f1f1" stroke="#8c8c8c" stroke-width="1.2"/><rect x="22" y="180" width="8.4" height="1.5" fill="#f3dba6"/><path d="M16.6 253.6H30.9L36.6 259.3V276.3H16.6z M30.9 253.6V259.3H36.6" fill="none" stroke="#9c9c9c" stroke-width="1.7"/><path d="M32.2 266.4h4.3v4.25h4.25v4.3h-4.25v4.25h-4.3v-4.25h-4.25v-4.3h4.25z" fill="#b3d285"/><path d="M17.3 299.9H31.4L37.1 305.6V323H17.3z M31.4 299.9V305.6H37.1" fill="none" stroke="#7c7c7c" stroke-width="1.7"/><path d="M20 303.3h4.7M20 307h4.7M20 312.6h13.3M20 316.1h11.9M20 319.7h4.7" stroke="#7c7c7c" stroke-width="1.4"/><rect x="15.1" y="344.1" width="22.1" height="7.8" fill="#7fa7d0"/><path d="M15.8 351.9V364.3A1.2 1.2 0 0 0 17 365.5H35.3A1.2 1.2 0 0 0 36.5 364.3V351.9" fill="none" stroke="#9c9c9c" stroke-width="1.5"/><rect x="18.25" y="341.2" width="2.3" height="4.7" rx="0.5" fill="#a0a0a0"/><rect x="22.85" y="341.2" width="2.3" height="4.7" rx="0.5" fill="#a0a0a0"/><rect x="27.45" y="341.2" width="2.3" height="4.7" rx="0.5" fill="#a0a0a0"/><rect x="32.15" y="341.2" width="2.3" height="4.7" rx="0.5" fill="#a0a0a0"/><text x="26.2" y="363.8" font-family="Liberation Mono, monospace" font-size="13" font-weight="bold" fill="#a0a0a0" text-anchor="middle" textLength="15.5" lengthAdjust="spacingAndGlyphs">12</text><circle cx="26.3" cy="396.6" r="12.40" fill="none" stroke="#7fa7d0" stroke-width="1.6"/><circle cx="26.3" cy="390.4" r="2.8" fill="#7fa7d0"/><path d="M22.8 395.2h5.4v8.6h2v1.9h-7.6v-1.9h2v-6.7h-1.8z" fill="#7fa7d0"/><rect x="21.1" y="431.5" width="16.8" height="10.8" fill="#f0f0f0" stroke="#a0a0a0" stroke-width="1.4"/><path d="M21.6 432L29.5 438.2L37.4 432" fill="none" stroke="#a0a0a0" stroke-width="1.2"/><rect x="14.7" y="442.9" width="17.2" height="11.5" fill="#f2f2f2" stroke="#a0a0a0" stroke-width="1.4"/><path d="M15.2 443.4L23.3 449.8L31.4 443.4M15.2 454L20.6 448M31.4 454L26 448" fill="none" stroke="#a0a0a0" stroke-width="1.1"/><path d="M15.2 440.4C14.2 435.4 17.4 432.6 20.4 432.8V430.6L24.4 434.2L20.4 437.6V435.6C18.4 435.6 17.6 437.4 18 440.4z" fill="#7fa7d0"/><path d="M36.8 445.6C37.8 450.6 34.6 453.4 31.6 453.2V455.4L27.6 451.8L31.6 448.4V450.4C33.6 450.4 34.4 448.6 34 445.6z" fill="#7fa7d0"/><rect x="19.8" y="474.2" width="13" height="11" fill="#f4f4f4" stroke="#a6a6a6" stroke-width="1.7"/><rect x="22.6" y="475.4" width="7.2" height="8" fill="#b4cce8"/><path d="M22.6 477.9h7.2M22.6 480.4h7.2" stroke="#c9dbef" stroke-width="0.7"/><rect x="13.6" y="484.1" width="25.4" height="12.8" rx="2.6" fill="#a6a6a6"/><rect x="17.2" y="492.2" width="18.2" height="2.8" fill="#fff"/><rect x="18" y="486.4" width="2" height="1" fill="#e6e6e6"/></svg>
<svg style="left:0;top:0" width="1183" height="644" viewBox="0 0 1183 644"><rect x="0" y="0" width="1183" height="4.05" fill="#2f3239"/><rect x="0" y="642.6" width="1183" height="1.4" fill="#2f3239"/><rect x="0" y="0" width="3.6" height="644" fill="#2f3239"/><rect x="1180.1" y="0" width="2.9" height="644" fill="#2f3239"/></svg>
</div>
<div id="soft"></div>
</body></html>
